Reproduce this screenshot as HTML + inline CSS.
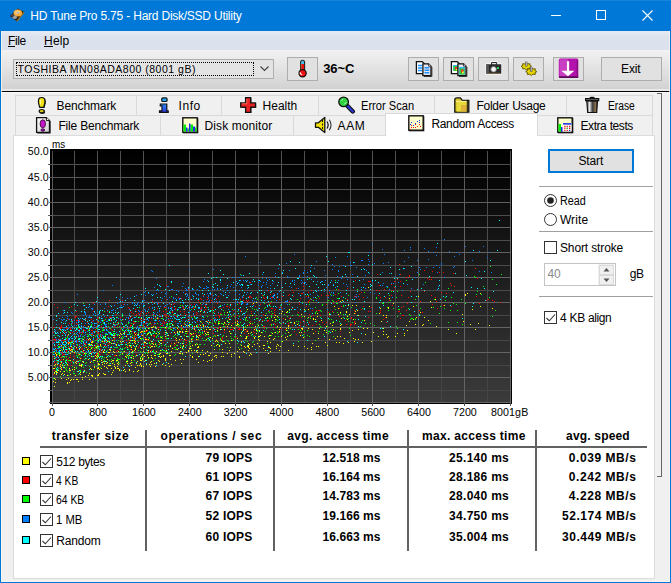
<!DOCTYPE html>
<html lang="en">
<head>
<meta charset="utf-8">
<title>HD Tune Pro 5.75 - Hard Disk/SSD Utility</title>
<style>
html,body{margin:0;padding:0;}
body{width:671px;height:583px;overflow:hidden;background:#f0f0f0;font-family:"Liberation Sans",sans-serif;font-size:12px;color:#000;position:relative;}
.abs{position:absolute;}
#win{position:absolute;left:0;top:0;width:671px;height:583px;overflow:hidden;background:#f0f0f0;}
#title{position:absolute;left:0;top:0;width:671px;height:31px;background:#0078d7;box-shadow:inset 0 1px 0 #1883db;}
#bl{position:absolute;left:0;top:31px;width:1px;height:552px;background:#0078d7;}
#br{position:absolute;left:670px;top:31px;width:1px;height:552px;background:#0078d7;}
#bb{position:absolute;left:0;top:582px;width:671px;height:1px;background:#0078d7;}
#menu{position:absolute;left:1px;top:31px;width:669px;height:19px;background:linear-gradient(#e7ebf3,#dde3ed 30%,#dbe2ed);}
#tool{position:absolute;left:1px;top:50px;width:669px;height:41px;background:linear-gradient(#f2f2f2,#d2d2d2 39px,#e8e8e8 39px,#e8e8e8);}
#sep{position:absolute;left:1px;top:91px;width:669px;height:1px;background:#000;border-bottom:1px solid #fcfcfc;}
#il{position:absolute;left:1px;top:31px;width:1px;height:551px;background:#f8f5ee;opacity:.8}
#ir{position:absolute;left:669px;top:31px;width:1px;height:551px;background:#f8f5ee;opacity:.8}
#ib{position:absolute;left:1px;top:581px;width:669px;height:1px;background:#f8f5ee;}
.tab{position:absolute;height:19px;border:1px solid #d9d9d9;background:#f0f0f0;box-sizing:content-box;}
#panel{position:absolute;left:13px;top:135px;width:640px;height:442px;background:#fff;border:1px solid #dcdcdc;border-top:1px solid #dcdcdc;}
.btn{position:absolute;box-sizing:border-box;border:1px solid #adadad;background:#e1e1e1;}
.hl{position:absolute;height:1px;background:#a0a0a0;}
.cb{position:absolute;width:11px;height:11px;border:1px solid #333;background:#fff;}
.lbl{position:absolute;white-space:pre;font-size:12px;}
.ax{position:absolute;font-size:10.67px;white-space:pre;}
.bm{position:absolute;font-size:12px;font-weight:bold;white-space:pre;}
.sw{position:absolute;width:6px;height:6px;border:1px solid #000;}
</style>
</head>
<body>
<div id="win">
<div id="title"><span class="lbl" style="left:30.3px;top:9px;letter-spacing:-0.27px;word-spacing:0.27px;color:#fff;">HD Tune Pro 5.75 - Hard Disk/SSD Utility</span>
<svg class="abs" style="left:0;top:0" width="671" height="31">
<g stroke="#fff" stroke-width="1" fill="none" shape-rendering="crispEdges">
<path d="M551 15.5h10"/>
<rect x="596.5" y="10.5" width="9" height="9"/>
</g>
<path d="M642.5 10.5l10 10M652.5 10.5l-10 10" stroke="#fff" stroke-width="1.1" fill="none"/>
<g>
<path d="M17.800 8.500l6.400 3.600-7.400 9.200-7-5.300z" fill="#2b2417"/>
<path d="M16.800 21.300l7.400-9.200" stroke="#9a7420" stroke-width="1.300" fill="none"/>
<ellipse cx="17.800" cy="13" rx="4.300" ry="3.500" fill="#f5a93a"/>
<ellipse cx="17.300" cy="12.300" rx="2.600" ry="1.900" fill="#fbc976"/>
<rect x="17" y="12" width="1.800" height="1.600" fill="#9fb0e0"/>
<ellipse cx="14.800" cy="17.200" rx="2.200" ry="1.700" fill="#a3a3a3"/>
<ellipse cx="12.600" cy="15.400" rx="1.500" ry="1.400" fill="#4a4a4a"/>
</g>
</svg>
</div>
<div id="bl"></div><div id="br"></div><div id="bb"></div>
<div id="menu"><span class="lbl" style="left:7.0px;top:2.5px;letter-spacing:-0.35px;"><u>F</u>ile</span><span class="lbl" style="left:43.0px;top:2.5px;letter-spacing:0.20px;"><u>H</u>elp</span></div>
<div id="tool">
<div class="abs" style="left:12px;top:9px;width:259px;height:18px;border:1px solid #adadad;background:#e3e3e3"></div>
<div class="abs" style="left:15px;top:12px;width:238px;height:14px;border:1px dotted #000;box-sizing:border-box"></div>
<span class="lbl" style="font-size:10.5px;left:16.5px;top:12.8px;letter-spacing:0.50px;">TOSHIBA MN08ADA800 (8001 gB)</span>
<svg class="abs" style="left:257px;top:14px" width="14" height="10"><path d="M2.5 2.5l4 4 4-4" stroke="#444" stroke-width="1.2" fill="none"/></svg>
<div class="btn" style="left:286px;top:7px;width:31px;height:24px"><svg width="29" height="22" style="position:absolute;left:0;top:0"><rect x="12.600" y="2.300" width="4" height="13" rx="2" fill="#48c4f2" stroke="#222" stroke-width="1.100"/><rect x="13.200" y="6" width="2.800" height="9" fill="#ee1010"/><path d="M13.300 6v8" stroke="#c06020" stroke-width=".8"/><circle cx="14.600" cy="15.300" r="3.600" fill="#ee1010" stroke="#111" stroke-width="1.200"/><path d="M12.300 14.200v1.600l1.800 1" stroke="#fff" stroke-width="1.100" fill="none"/></svg></div>
<span class="bm" style="font-size:13px;left:322.2px;top:10.5px;letter-spacing:-0.12px;">36~C</span>
<div class="btn" style="left:407px;top:7px;width:31px;height:24px"><svg width="29" height="22" style="position:absolute;left:0;top:0">
<path d="M7.400 3.600H13.200L15.400 5.800V15.700H7.400Z" fill="#fff" stroke="#111" stroke-width="1.300"/>
<path d="M9 7.500h4M9 10h4M9 12.500h4" stroke="#1e90ff" stroke-width="1.600"/>
<path d="M22.900 9V18.500H15" stroke="#444" stroke-width="1" fill="none"/>
<path d="M13.900 5.800H19.600L22 8.200V17.700H13.900Z" fill="#e4e4ec" stroke="#111" stroke-width="1.300"/>
<path d="M19.600 5.800V8.200H22" fill="#fff" stroke="#111" stroke-width=".8"/>
<path d="M15.500 9.800h4.800M15.500 12.300h4.800M15.500 14.800h4.800" stroke="#1e90ff" stroke-width="1.600"/>
</svg></div>
<div class="btn" style="left:442px;top:7px;width:31px;height:24px"><svg width="29" height="22" style="position:absolute;left:0;top:0">
<path d="M7.400 3.600H13.200L15.400 5.800V15.700H7.400Z" fill="#fff" stroke="#111" stroke-width="1.300"/>
<rect x="9" y="7" width="5" height="6" fill="#35b8f0"/><rect x="9.500" y="8" width="4.500" height="5" fill="#3c3"/><rect x="11" y="9" width="2" height="2.500" fill="#e33"/><rect x="12" y="11" width="1.500" height="1.500" fill="#ee3"/>
<path d="M22.900 9V18.500H15" stroke="#444" stroke-width="1" fill="none"/>
<path d="M13.900 5.800H19.600L22 8.200V17.700H13.900Z" fill="#e4e4ec" stroke="#111" stroke-width="1.300"/>
<path d="M19.600 5.800V8.200H22" fill="#fff" stroke="#111" stroke-width=".8"/>
<rect x="15" y="9" width="6" height="7.500" fill="#35b8f0"/><rect x="15.500" y="10.500" width="5" height="6" fill="#3c3"/><rect x="17" y="11.500" width="2.500" height="3" fill="#e33"/><rect x="18" y="13.500" width="1.800" height="1.800" fill="#ee3"/>
</svg></div>
<div class="btn" style="left:477px;top:7px;width:31px;height:24px"><svg width="29" height="22" style="position:absolute;left:0;top:0">
<path d="M7.300 6.200H12V5Q12 4 13 4H17.200Q18.200 4 18.200 5V6.200H22.300V15.800H7.300Z" fill="#2a2a2a" stroke="#fff" stroke-width="1.600" stroke-linejoin="round"/>
<path d="M7.300 6.200H12V5Q12 4 13 4H17.200Q18.200 4 18.200 5V6.200H22.300V15.800H7.300Z" fill="#2a2a2a"/>
<rect x="7.300" y="6.200" width="2.600" height="9.600" fill="#555"/>
<path d="M13 5h4.200v1.200H13z" fill="#ddd"/>
<circle cx="14.600" cy="11.300" r="2.800" fill="#f4f4f4" stroke="#666" stroke-width=".8"/>
<rect x="18" y="9.200" width="2" height="1.800" fill="#22e24a"/>
<path d="M8 15.300H21.500" stroke="#7a6a3a" stroke-width=".8"/>
</svg></div>
<div class="btn" style="left:512px;top:7px;width:31px;height:24px"><svg width="29" height="22" style="position:absolute;left:0;top:0"><path d="M17.5 8.3L15.8 9.3L16.0 10.8L13.7 10.7L12.3 11.9L10.9 10.7L8.6 10.8L8.8 9.3L7.1 8.3L8.8 7.3L8.6 5.8L10.9 5.9L12.3 4.7L13.7 5.9L16.0 5.8L15.8 7.3Z" fill="#e6d600" stroke="#6a5c00" stroke-width="1" stroke-linejoin="round"/><path d="M22.9 13.6L21.0 14.7L21.3 16.4L18.8 16.2L17.3 17.5L15.8 16.2L13.3 16.4L13.6 14.7L11.7 13.6L13.6 12.5L13.3 10.8L15.8 11.0L17.3 9.7L18.8 11.0L21.3 10.8L21.0 12.5Z" fill="#e6d600" stroke="#6a5c00" stroke-width="1" stroke-linejoin="round"/><path d="M12.300 3.500v5" stroke="#555" stroke-width="2.200"/><path d="M17.300 8.800v5" stroke="#555" stroke-width="2.200"/><path d="M12.300 3.500v4.500" stroke="#ccc" stroke-width=".9"/><path d="M17.300 8.800v4.500" stroke="#ccc" stroke-width=".9"/></svg></div>
<div class="btn" style="left:552px;top:7px;width:31px;height:24px"><svg width="29" height="22" style="position:absolute;left:0;top:0">
<rect x="4.800" y=".600" width="19.500" height="19.300" rx="1.500" fill="#b412ac"/>
<path d="M5.500 1.300H14V19H5.500Z" fill="#c93fc3"/>
<path d="M5 18.300H24.300V19.200Q24.300 19.900 23.500 19.900H5.800Q5 19.900 5 19.200Z" fill="#5e0a5a"/>
<path d="M23.300 2V19" stroke="#8a0f84" stroke-width="1.500"/>
<path d="M14.050 3.200V14" stroke="#fff" stroke-width="2.200"/>
<path d="M7.400 12.700H20.400L14 18.200Z" fill="#fff"/>
</svg></div>
<div class="btn" style="left:600px;top:7px;width:61px;height:24px"></div>
<span class="lbl" style="left:620.1px;top:11.5px;letter-spacing:-0.14px;">Exit</span>
</div>
<div id="sep"></div><div id="il"></div><div id="ir"></div><div id="ib"></div>
<svg class="abs" style="left:655px;top:92px" width="10" height="390" shape-rendering="crispEdges"><defs><linearGradient id="gpg" x1="0" y1="0" x2="1" y2="1"><stop offset="0" stop-color="#fff"/><stop offset="1" stop-color="#cfcfcf"/></linearGradient><linearGradient id="gtr" x1="0" y1="0" x2="1" y2="0"><stop offset="0" stop-color="#444"/><stop offset=".25" stop-color="#e6e6e6"/><stop offset=".55" stop-color="#3a3a3a"/><stop offset=".8" stop-color="#8a7048"/><stop offset="1" stop-color="#222"/></linearGradient><linearGradient id="gbl" x1="0" y1="0" x2="0" y2="1"><stop offset="0" stop-color="#2b8cf4"/><stop offset="1" stop-color="#2a32e0"/></linearGradient></defs><path d="M2 1.500h4.500v383h-4.500" stroke="#666" stroke-width="1" fill="none"/></svg>
<div class="tab" style="left:15px;top:95px;width:120px"><svg class="abs" style="left:17px;top:0px" width="20" height="18"><path d="M6.300 5.300Q6.300 2.300 9.500 2.300Q12.700 2.300 12.700 5.300V7.300L11.500 12.100H7.500L6.300 7.300Z" fill="#222"/><ellipse cx="9.500" cy="16" rx="2.700" ry="1.900" fill="#222"/><path d="M5.500 4.600Q5.500 1.500 8.700 1.500Q11.900 1.500 11.900 4.600V6.600L10.700 11.300H6.700L5.500 6.600Z" fill="#f2e016" stroke="#111" stroke-width="1.200"/><path d="M7.500 3.500v5" stroke="#fff78a" stroke-width="1.200"/><ellipse cx="8.700" cy="15.200" rx="2.500" ry="1.700" fill="#dccb10" stroke="#111" stroke-width="1.200"/></svg></div><span class="lbl" style="left:56.5px;top:99px;letter-spacing:-0.11px;z-index:4;">Benchmark</span>
<div class="tab" style="left:136px;top:95px;width:84px"><svg class="abs" style="left:17px;top:0px" width="20" height="18"><rect x="7.700" y="1.900" width="5.400" height="3.600" rx="1.300" fill="#1ea8f4" stroke="#111" stroke-width="1.200"/><path d="M6.300 8H12.800V14.800H14.200V16.300H5.500V14.800H8V9.800H6.300Z" fill="url(#gbl)" stroke="#111" stroke-width="1.200"/></svg></div><span class="lbl" style="left:178.5px;top:99px;letter-spacing:0.59px;z-index:4;">Info</span>
<div class="tab" style="left:221px;top:95px;width:96px"><svg class="abs" style="left:17px;top:0px" width="20" height="18"><path d="M7.300 2.300H12.400V7.600H17.200V11.900H12.400V17H7.300V11.900H2.400V7.600H7.300Z" fill="#333"/><path d="M6.600 1.600H11.700V6.900H16.500V11.200H11.700V16.300H6.600V11.200H1.700V6.900H6.600Z" fill="#e62222" stroke="#111" stroke-width="1.300"/><path d="M7.800 3v4.800H3" stroke="#f46a5a" stroke-width="1" fill="none"/></svg></div><span class="lbl" style="left:262.5px;top:99px;letter-spacing:0.02px;z-index:4;">Health</span>
<div class="tab" style="left:318px;top:95px;width:115px"><svg class="abs" style="left:18px;top:0px" width="20" height="18"><path d="M10.500 10l5.300 5.500" stroke="#111" stroke-width="4.400" stroke-linecap="round"/><path d="M10.500 10l5.300 5.500" stroke="#2a36d8" stroke-width="2.200" stroke-linecap="round"/><circle cx="6.600" cy="5.900" r="4.800" fill="#2fd23f" stroke="#111" stroke-width="1.300"/><path d="M4.300 4.600l1.600-1.600M7.300 8.300l2-2" stroke="#d8ffd8" stroke-width="1"/></svg></div><span class="lbl" style="left:360.5px;top:99px;letter-spacing:0;transform:scaleX(0.926);transform-origin:0 0;z-index:4;">Error Scan</span>
<div class="tab" style="left:434px;top:95px;width:131px"><svg class="abs" style="left:17px;top:0px" width="20" height="18"><path d="M2.800 3.800Q2.800 1.900 4.800 1.900H8.300L10.300 4.300H16.800V16.200H2.800Z" fill="#d8c428" stroke="#111" stroke-width="1.300"/><path d="M4.800 5.800H15V15.600H4.800Z" fill="#e9da3c"/><path d="M9 9H15V15.600H9Z" fill="#d9a63a" opacity=".75"/><path d="M15.300 5v11" stroke="#111" stroke-width="1"/><path d="M4 5.300H14.500" stroke="#fff9a0" stroke-width="1"/></svg></div><span class="lbl" style="left:476.5px;top:99px;letter-spacing:-0.28px;word-spacing:0.28px;z-index:4;">Folder Usage</span>
<div class="tab" style="left:566px;top:95px;width:85px"><svg class="abs" style="left:16px;top:0px" width="20" height="18"><path d="M7 2.300Q7 1.300 8 1.300H10.300Q11.300 1.300 11.300 2.300" stroke="#111" stroke-width="1.300" fill="none"/><path d="M3.800 5H14.500L13.700 16.500H4.700Z" fill="url(#gtr)" stroke="#111" stroke-width="1.200"/><path d="M2.600 2.700H15.700V4.700H2.600Z" fill="#777" stroke="#111" stroke-width="1.200"/></svg></div><span class="lbl" style="left:608.1px;top:99px;letter-spacing:0;transform:scaleX(0.855);transform-origin:0 0;z-index:4;">Erase</span>
<div class="tab" style="left:15px;top:115px;width:144px"><svg class="abs" style="left:18px;top:0px" width="20" height="18"><path d="M3.300 2.300H13.300L16.600 5.300V17.400H3.300Z" fill="#111"/><path d="M2.600 1.600H12.400L15.500 4.600V16.400H2.600Z" fill="url(#gpg)" stroke="#111" stroke-width="1.300"/><path d="M12.400 1.600V4.600H15.500" fill="#fff" stroke="#111" stroke-width="1"/><ellipse cx="8.800" cy="7.800" rx="2.700" ry="4" fill="#c716c7" stroke="#3a0a3a" stroke-width=".9"/><ellipse cx="8.800" cy="14" rx="1.900" ry="1.200" fill="#a010c0" stroke="#3a0a3a" stroke-width=".9"/></svg></div><span class="lbl" style="left:58.5px;top:119px;letter-spacing:-0.21px;word-spacing:0.21px;z-index:4;">File Benchmark</span>
<div class="tab" style="left:160px;top:115px;width:132px"><svg class="abs" style="left:20px;top:0px" width="20" height="18"><rect x="2" y="2" width="15.300" height="15.300" fill="#111"/><rect x="1.800" y="1.800" width="14.400" height="14.400" fill="#ffffcc" stroke="#111" stroke-width="1.400"/><path d="M2.500 15.500V8.500H5V15.500ZM6.500 15.500V12.500H8V15.500ZM9.500 15.500V8.500H12V15.500ZM14 15.500V11.500H15.500V15.500Z" fill="#00f000"/><path d="M5 15.500V11.500H6.500V15.500ZM8 15.500V7.500H9.500V15.500ZM12 15.500V10.500H14V15.500Z" fill="#2222f2"/></svg></div><span class="lbl" style="left:204.5px;top:119px;letter-spacing:0.10px;z-index:4;">Disk monitor</span>
<div class="tab" style="left:293px;top:115px;width:91px"><svg class="abs" style="left:20px;top:0px" width="20" height="18"><path d="M1.500 6.800H4.300L10.800 1.500V16.500L4.300 11.300H1.500Z" fill="#f0e000" stroke="#111" stroke-width="1.300" stroke-linejoin="round"/><path d="M8.500 4v10" stroke="#111" stroke-width="1" stroke-dasharray="2 1.500"/><path d="M13 5.500Q15.300 9 13 12.500" stroke="#111" stroke-width="1.200" fill="none"/><path d="M15.300 3.800Q18.800 9 15.300 14.200" stroke="#333" stroke-width="1.100" fill="none"/></svg></div><span class="lbl" style="left:337.5px;top:119px;letter-spacing:0.64px;z-index:4;">AAM</span>
<div class="tab" style="left:385px;top:113px;width:151px;height:22px;background:#fff;border-bottom:none;z-index:3"><svg class="abs" style="left:21px;top:0px" width="20" height="18"><rect x="2" y="2" width="15.300" height="15.300" fill="#111"/><rect x="1.800" y="1.800" width="14.400" height="14.400" fill="#ffffcc" stroke="#111" stroke-width="1.400"/><g shape-rendering="crispEdges"><path d="M4 8.500h1M3 10.500h1M6 11.500h1M8 9.500h1M10 7.500h1M12 6.500h1M12 8.500h1" stroke="#2030f0" stroke-width="1"/><path d="M4 11.500h1M4 13.500h1M3 15.500h1M8 10.500h1M8 13.500h1M10 12.500h1M12 10.500h1M13 12.500h1M6 13.500h1" stroke="#f01818" stroke-width="1"/></g></svg></div><span class="lbl" style="left:431.5px;top:117px;letter-spacing:-0.36px;word-spacing:0.36px;z-index:4;">Random Access</span>
<div class="tab" style="left:537px;top:115px;width:114px"><svg class="abs" style="left:18px;top:0px" width="20" height="18"><rect x="2" y="2" width="15.300" height="15.300" fill="#111"/><rect x="1.800" y="1.800" width="14.400" height="14.400" fill="#ffffcc" stroke="#111" stroke-width="1.400"/><path d="M2.500 15.500V8H5V15.500Z" fill="#00f000"/><path d="M5 15.500V11H6.500V15.500Z" fill="#2222f2"/><rect x="7" y="7" width="8.500" height="8.500" fill="#fff"/><rect x="7" y="7" width="8.500" height="1.700" fill="#3040e0"/><path d="M8.200 10.500h1.300M10.600 10.500h1.300M13 10.500h1.300M8.200 14.300h1.300M10.600 14.300h1.300" stroke="#f01818" stroke-width="1.300"/><path d="M8.200 12.400h1.300M13 12.400h1.300" stroke="#f01818" stroke-width="1.300"/><path d="M10.600 12.400h1.300" stroke="#12c012" stroke-width="1.300"/><path d="M13 14.300h1.300" stroke="#2030f0" stroke-width="1.300"/></svg></div><span class="lbl" style="left:580.5px;top:119px;letter-spacing:-0.43px;word-spacing:0.43px;z-index:4;">Extra tests</span>
<div id="panel"></div>
<svg class="abs" style="left:0;top:140px" width="530" height="270" shape-rendering="crispEdges">
<defs><linearGradient id="bg" x1="0" y1="0" x2="0" y2="1"><stop offset="0" stop-color="#000"/><stop offset="1" stop-color="#3b3b3b"/></linearGradient><linearGradient id="gmj" gradientUnits="userSpaceOnUse" x1="0" y1="11" x2="0" y2="80"><stop offset="0" stop-color="#525252"/><stop offset="1" stop-color="#646464"/></linearGradient><linearGradient id="gmn" gradientUnits="userSpaceOnUse" x1="0" y1="11" x2="0" y2="263"><stop offset="0" stop-color="#505050"/><stop offset="1" stop-color="#444444"/></linearGradient></defs>
<rect x="50" y="9" width="462" height="255" fill="#000"/>
<rect x="52" y="11" width="459" height="252" fill="url(#bg)"/>
<path d="M74.5 11V263M120.5 11V263M166.5 11V263M212.5 11V263M258.5 11V263M304.5 11V263M350.5 11V263M395.5 11V263M441.5 11V263M487.5 11V263M48 250.5H50M52 250.5H511M48 225.5H50M52 225.5H511M48 200.5H50M52 200.5H511M48 175.5H50M52 175.5H511M48 150.5H50M52 150.5H511M48 125.5H50M52 125.5H511M48 100.5H50M52 100.5H511M48 75.5H50M52 75.5H511M48 49.5H50M52 49.5H511M48 24.5H50M52 24.5H511" stroke="url(#gmn)" stroke-width="1" fill="none"/>
<path d="M52.5 11V263M97.5 11V263M143.5 11V263M189.5 11V263M235.5 11V263M281.5 11V263M327.5 11V263M372.5 11V263M418.5 11V263M464.5 11V263M510.5 11V263M49 262.5H511M48 250.5H52M49 237.5H511M48 225.5H52M49 212.5H511M48 200.5H52M49 187.5H511M48 175.5H52M49 162.5H511M48 150.5H52M49 137.5H511M48 125.5H52M49 112.5H511M48 100.5H52M49 87.5H511M48 75.5H52M49 62.5H511M48 49.5H52M49 37.5H511M48 24.5H52" stroke="url(#gmj)" stroke-width="1" fill="none"/>
<path d="M52.5 263v3M97.5 263v3M143.5 263v3M189.5 263v3M235.5 263v3M281.5 263v3M327.5 263v3M372.5 263v3M418.5 263v3M464.5 263v3M510.5 263v3" stroke="#555" stroke-width="1" fill="none"/>
<path d="M143 192.5h1M136 223.5h1M91 235.5h1M88 186.5h1M347 179.5h1M150 226.5h1M386 182.5h1M153 202.5h1M169 215.5h1M431 167.5h1M223 216.5h1M80 225.5h1M478 183.5h1M56 231.5h1M94 227.5h1M59 215.5h1M316 206.5h1M143 211.5h1M297 184.5h1M254 204.5h1M218 183.5h1M79 214.5h1M148 218.5h1M221 216.5h1M241 192.5h1M60 226.5h1M268 207.5h1M239 209.5h1M141 191.5h1M180 196.5h1M109 225.5h1M222 212.5h1M248 193.5h1M227 181.5h1M231 200.5h1M196 199.5h1M72 202.5h1M137 225.5h1M368 147.5h1M104 223.5h1M146 199.5h1M109 202.5h1M113 197.5h1M91 202.5h1M192 199.5h1M124 192.5h1M190 193.5h1M82 237.5h1M132 211.5h1M159 202.5h1M422 185.5h1M275 175.5h1M72 229.5h1M177 192.5h1M191 199.5h1M159 193.5h1M61 234.5h1M229 210.5h1M159 214.5h1M256 190.5h1M108 212.5h1M404 193.5h1M84 230.5h1M126 214.5h1M88 199.5h1M165 208.5h1M270 202.5h1M152 203.5h1M91 201.5h1M378 196.5h1M69 228.5h1M90 199.5h1M258 185.5h1M106 227.5h1M492 168.5h1M69 208.5h1M174 203.5h1M388 167.5h1M273 199.5h1M286 190.5h1M113 195.5h1M91 229.5h1M104 210.5h1M142 217.5h1M70 234.5h1M288 188.5h1M157 178.5h1M186 191.5h1M112 232.5h1M60 208.5h1M299 192.5h1M267 201.5h1M66 239.5h1M263 205.5h1M200 196.5h1M302 189.5h1M150 211.5h1M150 222.5h1M124 211.5h1M78 231.5h1M70 230.5h1M151 187.5h1M243 187.5h1M83 222.5h1M185 191.5h1M68 203.5h1M98 216.5h1M340 188.5h1M140 224.5h1M82 199.5h1M348 165.5h1M210 201.5h1M133 231.5h1M269 195.5h1M263 208.5h1M72 209.5h1M126 216.5h1M56 214.5h1M388 168.5h1M71 206.5h1M97 221.5h1M205 193.5h1M127 223.5h1M206 194.5h1M189 182.5h1M97 181.5h1M236 196.5h1M318 198.5h1M156 188.5h1M340 172.5h1M98 235.5h1M165 220.5h1M352 165.5h1M133 216.5h1M142 218.5h1M415 184.5h1M189 186.5h1M54 209.5h1M246 197.5h1M152 190.5h1M56 214.5h1M127 213.5h1M151 224.5h1M170 215.5h1M94 216.5h1M383 191.5h1M93 212.5h1M113 211.5h1M99 229.5h1M465 155.5h1M179 199.5h1M339 202.5h1M126 217.5h1M204 191.5h1M304 176.5h1M254 198.5h1M196 195.5h1M145 199.5h1M196 219.5h1M330 183.5h1M220 187.5h1M119 230.5h1M112 223.5h1M105 221.5h1M140 192.5h1M250 183.5h1M186 185.5h1M198 207.5h1M190 215.5h1M147 194.5h1M98 201.5h1M154 206.5h1M346 172.5h1M92 235.5h1M71 239.5h1M101 210.5h1M96 216.5h1M206 181.5h1M148 199.5h1M237 183.5h1M88 204.5h1M341 184.5h1M180 207.5h1M54 233.5h1M179 213.5h1M216 215.5h1M270 211.5h1M69 242.5h1M252 206.5h1M249 208.5h1M98 224.5h1M163 216.5h1M206 199.5h1M251 214.5h1M191 201.5h1M54 221.5h1M165 211.5h1M131 225.5h1M235 182.5h1M54 238.5h1M95 238.5h1M85 236.5h1M319 188.5h1M317 173.5h1M181 186.5h1M256 193.5h1M83 227.5h1M217 201.5h1M113 230.5h1M58 212.5h1M193 193.5h1M169 226.5h1M257 190.5h1M148 217.5h1M117 223.5h1M209 182.5h1M208 187.5h1M321 180.5h1M186 189.5h1M248 210.5h1M338 168.5h1M122 201.5h1M208 194.5h1M56 215.5h1M406 185.5h1M313 193.5h1M85 214.5h1M70 220.5h1M290 182.5h1M107 201.5h1M335 198.5h1M138 202.5h1M215 201.5h1M114 197.5h1M142 219.5h1M420 172.5h1M224 182.5h1M83 232.5h1M383 194.5h1M349 192.5h1M192 199.5h1M260 195.5h1M140 223.5h1M141 216.5h1M117 228.5h1M166 210.5h1M98 206.5h1M430 161.5h1M141 193.5h1M177 188.5h1M105 199.5h1M99 224.5h1M301 192.5h1M358 175.5h1M217 204.5h1M68 203.5h1M180 191.5h1M141 193.5h1M301 188.5h1M241 205.5h1M71 209.5h1M136 206.5h1M158 189.5h1M257 203.5h1M262 180.5h1M274 177.5h1M125 225.5h1M313 179.5h1M444 165.5h1M63 226.5h1M217 190.5h1M245 189.5h1M119 197.5h1M219 181.5h1M124 229.5h1M150 192.5h1M238 184.5h1M98 227.5h1M267 177.5h1M168 195.5h1M278 205.5h1M199 195.5h1M156 193.5h1M61 238.5h1M131 222.5h1M92 205.5h1M251 192.5h1M134 202.5h1M270 195.5h1M174 215.5h1M69 220.5h1M243 211.5h1M214 195.5h1M135 227.5h1M237 211.5h1M92 236.5h1M253 163.5h1M55 242.5h1M373 192.5h1M188 211.5h1M380 160.5h1M247 206.5h1M168 188.5h1M56 212.5h1M352 190.5h1M135 194.5h1M81 225.5h1M203 214.5h1M259 206.5h1M172 184.5h1M258 199.5h1M198 206.5h1M188 185.5h1M198 216.5h1M96 207.5h1M211 205.5h1M210 189.5h1M188 210.5h1M383 188.5h1M294 182.5h1M118 228.5h1M107 219.5h1M249 204.5h1M371 201.5h1M88 199.5h1M67 235.5h1M60 210.5h1M324 190.5h1M191 210.5h1M281 196.5h1M118 224.5h1M180 219.5h1M144 191.5h1M347 176.5h1M166 213.5h1M203 185.5h1M117 226.5h1M60 231.5h1M400 173.5h1M182 213.5h1M192 182.5h1M216 205.5h1M264 205.5h1M472 169.5h1M160 200.5h1M142 195.5h1M203 185.5h1M111 206.5h1M280 187.5h1M196 211.5h1M244 206.5h1M154 223.5h1M315 179.5h1M95 218.5h1M76 239.5h1M90 222.5h1M107 222.5h1M81 206.5h1M109 209.5h1M300 195.5h1M268 213.5h1M489 185.5h1M125 216.5h1M74 212.5h1M224 189.5h1M209 220.5h1M194 210.5h1M225 203.5h1M56 232.5h1M89 233.5h1M64 234.5h1M211 220.5h1M127 221.5h1M197 210.5h1M216 217.5h1M53 241.5h1M182 191.5h1M145 202.5h1M63 209.5h1M83 210.5h1M276 208.5h1M99 224.5h1M256 162.5h1M91 208.5h1M84 208.5h1M61 229.5h1M69 242.5h1M190 208.5h1M197 196.5h1M69 230.5h1M101 228.5h1M115 227.5h1M202 191.5h1M212 198.5h1M74 229.5h1M55 231.5h1M184 195.5h1M115 195.5h1M200 181.5h1M193 196.5h1M73 207.5h1M141 226.5h1M171 198.5h1M247 191.5h1M383 175.5h1M134 192.5h1M54 218.5h1M54 232.5h1M54 228.5h1M121 194.5h1M155 187.5h1M108 225.5h1M148 193.5h1M123 230.5h1M160 217.5h1M95 215.5h1M285 197.5h1M203 186.5h1M269 198.5h1M70 240.5h1M126 196.5h1M117 207.5h1M126 221.5h1M270 208.5h1M298 206.5h1M200 214.5h1M103 221.5h1M288 185.5h1M183 205.5h1M208 192.5h1M225 183.5h1M115 215.5h1M101 212.5h1M180 213.5h1M184 195.5h1M183 219.5h1M180 211.5h1M135 208.5h1M326 192.5h1M117 220.5h1M63 219.5h1M167 213.5h1M58 206.5h1M84 213.5h1M82 221.5h1M252 175.5h1M290 195.5h1M277 186.5h1M237 184.5h1M304 169.5h1M456 193.5h1M149 224.5h1M156 223.5h1M326 186.5h1M240 195.5h1M143 211.5h1M80 234.5h1M184 199.5h1M239 217.5h1M103 207.5h1M388 196.5h1M342 160.5h1M234 213.5h1M161 200.5h1M308 188.5h1M220 189.5h1M177 205.5h1M171 224.5h1M151 206.5h1M318 193.5h1M247 185.5h1M184 169.5h1M217 195.5h1M131 207.5h1M154 195.5h1M231 185.5h1M186 212.5h1M55 213.5h1M86 207.5h1M97 235.5h1M65 194.5h1M138 230.5h1M115 193.5h1M93 220.5h1M172 208.5h1M103 233.5h1M118 211.5h1M216 180.5h1M148 212.5h1M301 174.5h1M177 209.5h1M275 184.5h1M313 178.5h1M259 200.5h1M135 209.5h1M81 226.5h1M56 234.5h1M234 188.5h1M346 171.5h1M176 200.5h1M462 174.5h1M99 233.5h1M379 173.5h1M208 215.5h1M88 235.5h1M261 192.5h1M97 213.5h1M363 188.5h1M223 184.5h1M239 216.5h1M222 209.5h1M230 207.5h1M75 235.5h1M131 209.5h1M119 195.5h1M356 165.5h1M245 198.5h1M62 224.5h1M246 177.5h1M348 202.5h1M141 225.5h1M76 239.5h1M386 177.5h1M79 208.5h1M151 221.5h1M158 220.5h1M162 224.5h1M57 224.5h1M207 192.5h1M480 153.5h1M62 225.5h1M130 206.5h1M153 186.5h1M60 224.5h1M153 204.5h1M475 189.5h1M428 180.5h1M413 166.5h1M151 215.5h1M245 180.5h1M237 198.5h1M243 190.5h1M237 181.5h1M219 206.5h1M91 216.5h1M241 208.5h1M219 205.5h1M227 213.5h1M206 189.5h1M134 200.5h1M416 177.5h1M68 238.5h1M59 207.5h1M116 204.5h1M294 183.5h1M61 227.5h1M229 179.5h1M203 220.5h1M302 188.5h1M97 215.5h1M250 213.5h1M66 223.5h1M140 218.5h1M259 190.5h1M265 175.5h1M97 217.5h1M102 222.5h1M158 201.5h1M413 179.5h1M196 203.5h1M200 185.5h1M147 210.5h1M158 189.5h1M279 191.5h1M274 183.5h1M281 173.5h1M113 220.5h1M66 223.5h1M159 216.5h1M168 223.5h1M123 193.5h1M329 174.5h1M90 228.5h1M178 202.5h1M163 215.5h1M205 213.5h1M89 198.5h1M90 209.5h1M272 180.5h1M67 243.5h1M91 213.5h1M343 203.5h1M56 212.5h1M111 203.5h1M300 158.5h1M92 202.5h1M340 185.5h1M397 193.5h1M120 201.5h1M214 209.5h1M113 195.5h1M463 181.5h1M59 214.5h1M152 187.5h1M165 196.5h1M137 221.5h1M358 189.5h1M340 189.5h1M165 187.5h1M113 203.5h1M63 207.5h1M53 228.5h1M353 198.5h1M106 206.5h1M122 204.5h1M312 189.5h1M354 201.5h1M175 220.5h1M101 220.5h1M129 230.5h1M355 183.5h1M166 222.5h1M161 203.5h1M106 223.5h1M156 211.5h1M236 185.5h1M197 204.5h1M127 215.5h1M170 206.5h1M194 186.5h1M186 196.5h1M105 196.5h1M176 198.5h1M148 188.5h1M409 181.5h1M130 223.5h1M141 178.5h1M82 224.5h1M97 206.5h1M109 212.5h1M114 202.5h1M61 234.5h1M159 221.5h1M118 222.5h1M288 186.5h1M54 225.5h1M98 234.5h1M112 200.5h1M199 190.5h1M286 199.5h1M165 219.5h1M91 208.5h1M111 234.5h1M255 186.5h1M74 233.5h1M174 192.5h1M55 239.5h1M286 172.5h1M177 191.5h1M274 198.5h1M74 206.5h1M247 169.5h1M81 218.5h1M367 188.5h1M77 239.5h1M111 228.5h1M111 221.5h1M142 215.5h1M222 201.5h1M231 214.5h1M155 215.5h1M127 205.5h1M182 208.5h1M150 207.5h1M249 215.5h1M90 213.5h1M76 207.5h1M101 218.5h1M74 201.5h1M337 196.5h1M154 215.5h1M54 246.5h1M287 196.5h1M142 191.5h1M135 207.5h1M70 215.5h1M147 215.5h1M407 190.5h1M338 174.5h1M304 206.5h1M87 209.5h1M380 168.5h1M386 194.5h1M197 212.5h1M125 207.5h1M142 214.5h1M107 228.5h1M161 216.5h1M344 198.5h1M81 211.5h1M126 216.5h1M351 184.5h1M362 202.5h1M209 215.5h1M134 210.5h1M141 220.5h1M334 166.5h1M81 215.5h1M105 234.5h1M279 189.5h1M327 205.5h1M67 242.5h1M265 210.5h1M276 206.5h1M286 188.5h1M165 225.5h1M207 221.5h1M189 201.5h1M191 194.5h1M69 242.5h1M100 204.5h1M136 215.5h1M308 169.5h1M198 197.5h1M138 194.5h1M120 193.5h1M141 225.5h1M126 221.5h1M264 196.5h1M171 211.5h1M80 232.5h1M470 184.5h1M54 222.5h1M246 196.5h1M64 227.5h1M215 189.5h1M285 179.5h1M129 215.5h1M104 212.5h1M79 225.5h1M114 212.5h1M308 177.5h1M279 210.5h1M132 197.5h1M116 204.5h1M137 195.5h1M182 192.5h1M424 177.5h1M155 204.5h1M114 193.5h1M170 205.5h1M67 224.5h1M200 171.5h1M115 228.5h1M132 200.5h1M196 186.5h1M73 222.5h1M72 211.5h1M254 197.5h1M64 231.5h1M311 207.5h1M70 210.5h1M132 212.5h1M146 203.5h1M480 166.5h1M70 197.5h1M146 190.5h1M144 216.5h1M98 223.5h1M104 217.5h1M275 179.5h1M197 207.5h1M325 202.5h1M130 200.5h1M58 230.5h1M183 209.5h1M201 187.5h1M81 224.5h1M214 216.5h1M189 208.5h1M124 196.5h1M98 228.5h1M165 218.5h1M227 172.5h1M210 213.5h1M91 202.5h1M212 219.5h1M57 232.5h1M139 225.5h1M143 226.5h1M282 171.5h1M60 214.5h1M94 210.5h1M182 203.5h1M140 198.5h1M288 210.5h1M192 205.5h1M227 186.5h1M89 239.5h1M73 239.5h1M135 203.5h1M259 196.5h1M312 203.5h1M137 231.5h1M192 217.5h1M133 200.5h1M146 224.5h1M70 205.5h1M201 212.5h1M94 220.5h1M195 204.5h1M210 197.5h1M190 206.5h1M63 202.5h1M215 215.5h1M192 216.5h1M97 228.5h1M329 199.5h1M102 224.5h1M165 194.5h1M67 219.5h1M130 191.5h1M303 197.5h1M114 226.5h1M155 226.5h1M181 185.5h1M340 196.5h1M248 203.5h1M186 200.5h1M116 220.5h1M231 216.5h1M307 208.5h1M74 227.5h1M395 196.5h1M160 213.5h1M91 204.5h1M116 215.5h1M151 195.5h1M99 211.5h1M75 222.5h1M127 209.5h1M161 197.5h1M436 186.5h1M94 226.5h1M104 234.5h1M381 181.5h1M73 203.5h1M229 191.5h1M183 205.5h1M63 206.5h1M248 206.5h1M131 217.5h1M404 195.5h1M82 239.5h1M92 201.5h1M58 206.5h1M100 205.5h1M151 201.5h1M287 171.5h1M59 207.5h1M80 207.5h1M103 201.5h1M349 174.5h1M54 230.5h1M112 220.5h1M70 213.5h1M258 196.5h1M311 209.5h1M248 207.5h1M68 194.5h1M103 211.5h1M340 161.5h1M353 179.5h1M418 156.5h1M129 205.5h1M198 222.5h1M55 224.5h1M54 230.5h1M423 184.5h1M230 207.5h1M217 204.5h1M179 191.5h1M141 208.5h1M219 183.5h1M152 218.5h1M202 210.5h1M110 210.5h1M355 199.5h1M54 216.5h1M127 207.5h1M282 201.5h1M341 178.5h1M218 195.5h1M69 202.5h1M166 192.5h1M336 202.5h1M107 194.5h1M73 208.5h1M389 158.5h1M358 199.5h1M209 189.5h1M151 217.5h1M202 190.5h1M467 153.5h1M318 206.5h1M130 206.5h1M245 207.5h1M160 210.5h1M194 189.5h1M386 175.5h1M110 225.5h1M104 226.5h1M465 154.5h1M196 185.5h1M369 166.5h1M200 214.5h1M119 229.5h1M174 192.5h1M241 201.5h1M144 207.5h1M365 194.5h1M226 196.5h1M181 223.5h1M435 159.5h1M129 202.5h1M448 189.5h1M131 212.5h1M293 205.5h1M89 204.5h1M289 169.5h1M88 219.5h1M84 206.5h1M354 173.5h1M183 206.5h1M393 163.5h1M129 229.5h1M280 206.5h1M168 223.5h1M102 201.5h1M355 171.5h1M288 192.5h1M333 189.5h1M130 196.5h1M228 184.5h1M125 231.5h1M81 201.5h1M364 180.5h1M145 220.5h1M76 221.5h1M129 194.5h1M131 220.5h1M76 213.5h1M61 222.5h1M216 200.5h1M317 176.5h1M229 203.5h1M83 199.5h1M333 182.5h1M140 220.5h1M106 217.5h1M80 218.5h1M144 202.5h1M244 212.5h1M62 233.5h1M170 219.5h1M248 205.5h1M332 185.5h1M133 205.5h1M221 200.5h1M103 212.5h1M145 198.5h1M177 195.5h1M61 205.5h1M332 191.5h1M135 201.5h1M175 194.5h1M145 202.5h1M116 205.5h1M269 207.5h1M277 176.5h1M275 192.5h1M78 241.5h1M254 189.5h1M200 204.5h1M148 210.5h1M133 218.5h1M230 196.5h1M122 213.5h1M246 198.5h1M230 193.5h1M89 229.5h1M207 211.5h1M114 224.5h1M76 223.5h1M152 206.5h1M387 197.5h1M357 170.5h1M272 193.5h1M277 204.5h1M58 220.5h1" stroke="#ffff00" stroke-width="1" fill="none"/><path d="M118 184.5h1M398 171.5h1M268 150.5h1M204 190.5h1M70 192.5h1M274 187.5h1M101 196.5h1M178 189.5h1M169 181.5h1M378 155.5h1M216 159.5h1M219 176.5h1M162 176.5h1M70 189.5h1M431 139.5h1M83 189.5h1M62 212.5h1M91 177.5h1M156 187.5h1M95 209.5h1M114 198.5h1M312 185.5h1M386 182.5h1M216 199.5h1M114 202.5h1M237 187.5h1M129 213.5h1M195 190.5h1M70 188.5h1M138 173.5h1M144 197.5h1M266 188.5h1M72 183.5h1M172 172.5h1M73 220.5h1M338 149.5h1M96 186.5h1M136 171.5h1M300 158.5h1M192 199.5h1M108 166.5h1M154 196.5h1M274 172.5h1M93 207.5h1M231 164.5h1M271 174.5h1M289 161.5h1M158 204.5h1M244 193.5h1M399 171.5h1M71 166.5h1M149 177.5h1M328 157.5h1M116 194.5h1M76 191.5h1M64 206.5h1M59 189.5h1M141 171.5h1M130 171.5h1M130 177.5h1M299 162.5h1M379 150.5h1M453 133.5h1M279 159.5h1M208 158.5h1M76 197.5h1M54 199.5h1M150 205.5h1M82 193.5h1M227 188.5h1M85 207.5h1M55 212.5h1M171 180.5h1M111 177.5h1M268 170.5h1M182 188.5h1M300 182.5h1M96 186.5h1M171 203.5h1M159 174.5h1M298 172.5h1M234 176.5h1M106 177.5h1M329 152.5h1M321 155.5h1M110 180.5h1M133 173.5h1M67 221.5h1M238 189.5h1M239 188.5h1M89 207.5h1M126 184.5h1M126 185.5h1M179 158.5h1M451 145.5h1M274 183.5h1M200 189.5h1M81 218.5h1M389 160.5h1M68 179.5h1M311 150.5h1M167 195.5h1M201 159.5h1M166 175.5h1M66 211.5h1M147 199.5h1M309 182.5h1M350 184.5h1M279 169.5h1M203 188.5h1M306 156.5h1M176 202.5h1M175 204.5h1M262 180.5h1M141 195.5h1M77 201.5h1M217 163.5h1M174 163.5h1M492 160.5h1M164 200.5h1M183 167.5h1M81 200.5h1M72 192.5h1M95 206.5h1M68 202.5h1M436 161.5h1M340 191.5h1M241 189.5h1M255 176.5h1M368 177.5h1M60 217.5h1M454 146.5h1M255 166.5h1M243 160.5h1M218 180.5h1M368 141.5h1M58 217.5h1M198 195.5h1M260 164.5h1M175 199.5h1M406 170.5h1M282 156.5h1M192 194.5h1M392 165.5h1M58 193.5h1M213 190.5h1M164 194.5h1M316 184.5h1M165 165.5h1M86 199.5h1M94 185.5h1M181 158.5h1M410 151.5h1M131 185.5h1M61 207.5h1M296 194.5h1M394 141.5h1M186 180.5h1M226 166.5h1M368 171.5h1M77 209.5h1M85 203.5h1M289 154.5h1M391 155.5h1M155 177.5h1M294 191.5h1M62 215.5h1M191 176.5h1M63 189.5h1M211 154.5h1M161 185.5h1M363 166.5h1M270 154.5h1M96 188.5h1M59 225.5h1M312 170.5h1M300 187.5h1M205 165.5h1M161 176.5h1M203 194.5h1M56 187.5h1M135 175.5h1M92 181.5h1M109 160.5h1M408 157.5h1M79 189.5h1M308 161.5h1M420 161.5h1M155 180.5h1M57 216.5h1M166 145.5h1M140 189.5h1M84 203.5h1M102 217.5h1M59 199.5h1M110 202.5h1M84 197.5h1M58 199.5h1M154 195.5h1M164 183.5h1M341 156.5h1M249 156.5h1M351 184.5h1M76 171.5h1M377 134.5h1M500 162.5h1M218 156.5h1M152 190.5h1M96 206.5h1M289 178.5h1M272 157.5h1M304 181.5h1M380 172.5h1M69 207.5h1M84 216.5h1M224 192.5h1M126 206.5h1M230 189.5h1M114 196.5h1M164 174.5h1M401 167.5h1M309 174.5h1M91 194.5h1M62 213.5h1M173 164.5h1M175 194.5h1M98 205.5h1M96 214.5h1M225 183.5h1M175 169.5h1M153 202.5h1M73 216.5h1M68 204.5h1M201 168.5h1M271 174.5h1M77 220.5h1M355 140.5h1M128 191.5h1M54 214.5h1M194 167.5h1M329 176.5h1M99 217.5h1M59 204.5h1M154 184.5h1M63 214.5h1M55 227.5h1M403 175.5h1M244 189.5h1M439 132.5h1M231 193.5h1M108 203.5h1M132 210.5h1M201 164.5h1M246 160.5h1M180 175.5h1M67 219.5h1M90 221.5h1M99 214.5h1M254 195.5h1M494 161.5h1M101 194.5h1M292 185.5h1M180 192.5h1M347 159.5h1M83 211.5h1M113 209.5h1M182 177.5h1M64 187.5h1M61 223.5h1M64 191.5h1M431 137.5h1M252 184.5h1M135 169.5h1M222 198.5h1M264 188.5h1M247 161.5h1M261 177.5h1M69 203.5h1M158 198.5h1M54 211.5h1M240 171.5h1M55 208.5h1M292 168.5h1M106 214.5h1M299 164.5h1M57 192.5h1M232 187.5h1M292 150.5h1M68 222.5h1M306 166.5h1M76 183.5h1M140 173.5h1M64 214.5h1M239 189.5h1M145 198.5h1M121 199.5h1M370 141.5h1M339 176.5h1M172 167.5h1M402 175.5h1M143 172.5h1M268 164.5h1M53 187.5h1M252 160.5h1M403 166.5h1M204 170.5h1M220 168.5h1M219 177.5h1M158 178.5h1M76 180.5h1M85 204.5h1M293 152.5h1M81 218.5h1M68 218.5h1M90 206.5h1M143 180.5h1M66 210.5h1M435 157.5h1M118 204.5h1M144 205.5h1M62 195.5h1M165 174.5h1M93 163.5h1M139 205.5h1M99 195.5h1M129 206.5h1M98 177.5h1M195 193.5h1M376 150.5h1M114 186.5h1M190 195.5h1M328 157.5h1M99 196.5h1M126 191.5h1M126 195.5h1M271 157.5h1M303 143.5h1M122 160.5h1M82 192.5h1M202 184.5h1M64 187.5h1M53 202.5h1M100 210.5h1M136 193.5h1M129 178.5h1M380 170.5h1M176 208.5h1M319 181.5h1M69 210.5h1M132 191.5h1M326 164.5h1M146 182.5h1M266 169.5h1M437 168.5h1M169 183.5h1M193 188.5h1M130 186.5h1M290 177.5h1M240 170.5h1M244 177.5h1M144 203.5h1M220 198.5h1M61 200.5h1M148 172.5h1M197 181.5h1M131 172.5h1M279 192.5h1M363 157.5h1M110 177.5h1M207 181.5h1M73 216.5h1M158 163.5h1M135 211.5h1M248 195.5h1M117 186.5h1M57 221.5h1M153 195.5h1M288 155.5h1M308 152.5h1M219 187.5h1M276 187.5h1M189 167.5h1M113 206.5h1M97 181.5h1M136 197.5h1M162 183.5h1M164 192.5h1M117 210.5h1M185 153.5h1M128 167.5h1M57 167.5h1M70 217.5h1M56 219.5h1M361 152.5h1M232 187.5h1M109 177.5h1M145 191.5h1M107 205.5h1M220 173.5h1M92 190.5h1M55 217.5h1M95 205.5h1M198 185.5h1M476 156.5h1M199 162.5h1M275 169.5h1M92 211.5h1M103 201.5h1M251 171.5h1M120 177.5h1M104 202.5h1M429 139.5h1M79 181.5h1M165 167.5h1M267 181.5h1M98 193.5h1M82 211.5h1M206 167.5h1M313 175.5h1M98 182.5h1M140 186.5h1M263 174.5h1M105 207.5h1M191 164.5h1M134 201.5h1M57 216.5h1M88 195.5h1M170 166.5h1M248 160.5h1M134 193.5h1M53 216.5h1M231 189.5h1M255 188.5h1M186 174.5h1M198 160.5h1M64 206.5h1M160 187.5h1M163 171.5h1M96 199.5h1M354 170.5h1M112 190.5h1M60 188.5h1M114 179.5h1M154 191.5h1M124 186.5h1M70 208.5h1M303 146.5h1M165 176.5h1M74 218.5h1M81 215.5h1M83 201.5h1M75 177.5h1M316 170.5h1M319 158.5h1M239 168.5h1M141 181.5h1M168 179.5h1M54 222.5h1M424 130.5h1M77 180.5h1M109 201.5h1M105 194.5h1M383 179.5h1M475 128.5h1M189 185.5h1M67 196.5h1M87 191.5h1M237 175.5h1M107 214.5h1M308 162.5h1M249 184.5h1M165 198.5h1M107 200.5h1M123 164.5h1M95 189.5h1M184 184.5h1M110 208.5h1M190 159.5h1M162 185.5h1M72 202.5h1M75 177.5h1M347 148.5h1M134 198.5h1M115 195.5h1M91 201.5h1M116 184.5h1M59 196.5h1M98 192.5h1M306 185.5h1M168 176.5h1M175 168.5h1M234 173.5h1M328 155.5h1M75 176.5h1M145 179.5h1M153 178.5h1M274 174.5h1M419 170.5h1M136 214.5h1M223 195.5h1M67 195.5h1M211 179.5h1M205 166.5h1M101 212.5h1M172 171.5h1M272 168.5h1M359 159.5h1M53 192.5h1M100 214.5h1M253 191.5h1M250 166.5h1M63 189.5h1M153 170.5h1M65 181.5h1M157 187.5h1M270 184.5h1M128 188.5h1M53 199.5h1M175 181.5h1M152 174.5h1M93 171.5h1M146 191.5h1M149 205.5h1M56 220.5h1M407 163.5h1M202 190.5h1M251 173.5h1M131 206.5h1M188 177.5h1M197 173.5h1M137 187.5h1M133 183.5h1M157 168.5h1M107 171.5h1M249 157.5h1M104 180.5h1M141 180.5h1M90 206.5h1M197 199.5h1M127 213.5h1M446 153.5h1M422 172.5h1M222 197.5h1M215 178.5h1M183 189.5h1M194 175.5h1M309 160.5h1M92 192.5h1M164 182.5h1M97 178.5h1M169 188.5h1M281 167.5h1M443 165.5h1M246 191.5h1M239 163.5h1M88 211.5h1M176 176.5h1M105 194.5h1M79 193.5h1M71 225.5h1M147 178.5h1M296 148.5h1M318 170.5h1M315 191.5h1M198 186.5h1M329 150.5h1M409 136.5h1M279 167.5h1M283 178.5h1M187 193.5h1M355 173.5h1M143 186.5h1M60 190.5h1M400 146.5h1M266 157.5h1M359 154.5h1M145 183.5h1M195 167.5h1M214 167.5h1M211 160.5h1M293 156.5h1M105 204.5h1M99 185.5h1M166 188.5h1M66 186.5h1M134 183.5h1M477 138.5h1M87 194.5h1M424 151.5h1M188 167.5h1M115 195.5h1M77 184.5h1M335 154.5h1M178 157.5h1M158 181.5h1M63 200.5h1M76 208.5h1M289 185.5h1M205 185.5h1M304 192.5h1M66 217.5h1M196 172.5h1M82 181.5h1M236 196.5h1M142 206.5h1M138 201.5h1M173 176.5h1M74 185.5h1M324 184.5h1M95 200.5h1M101 186.5h1M78 180.5h1M392 150.5h1M96 191.5h1M151 178.5h1M145 205.5h1M281 188.5h1M240 179.5h1M400 178.5h1M218 173.5h1M68 225.5h1M85 190.5h1M361 152.5h1M252 164.5h1M151 189.5h1M61 187.5h1M247 175.5h1M196 174.5h1M156 174.5h1M273 157.5h1M299 176.5h1M67 188.5h1M200 158.5h1M345 180.5h1M82 199.5h1M188 191.5h1M320 175.5h1M79 217.5h1M251 173.5h1M89 184.5h1M225 186.5h1M188 149.5h1M72 198.5h1M106 193.5h1M185 200.5h1M254 192.5h1M60 187.5h1M218 188.5h1M100 210.5h1M115 215.5h1M346 184.5h1M203 155.5h1M91 212.5h1M300 185.5h1M85 179.5h1M193 168.5h1M67 202.5h1M269 164.5h1M443 132.5h1M99 219.5h1M70 215.5h1M193 187.5h1M70 190.5h1M270 152.5h1M227 166.5h1M82 208.5h1M186 200.5h1M116 211.5h1M200 188.5h1M59 216.5h1M133 183.5h1M79 180.5h1M113 183.5h1M130 209.5h1M170 188.5h1M338 160.5h1M108 183.5h1M133 168.5h1M441 152.5h1M322 182.5h1M205 169.5h1M65 192.5h1M301 153.5h1M361 169.5h1M88 200.5h1M240 159.5h1M195 191.5h1M136 174.5h1M400 134.5h1M79 201.5h1M328 172.5h1M70 190.5h1M273 153.5h1M181 199.5h1M385 177.5h1M99 212.5h1M451 166.5h1M237 180.5h1M174 174.5h1M66 188.5h1M91 190.5h1M64 199.5h1M341 166.5h1M232 189.5h1M53 199.5h1M221 199.5h1M149 167.5h1M72 180.5h1M243 157.5h1M298 187.5h1M56 223.5h1M56 209.5h1M486 160.5h1M431 155.5h1M263 186.5h1M247 190.5h1M212 169.5h1M302 153.5h1M54 221.5h1M291 169.5h1M61 186.5h1M170 193.5h1M185 204.5h1M207 182.5h1M103 207.5h1M380 157.5h1M122 187.5h1M232 183.5h1M166 171.5h1M75 190.5h1M370 171.5h1M74 201.5h1M100 209.5h1M134 199.5h1M200 169.5h1M371 167.5h1M113 184.5h1M252 166.5h1M78 190.5h1M139 175.5h1M117 182.5h1M184 171.5h1M141 184.5h1M356 156.5h1M229 176.5h1M185 184.5h1M194 164.5h1M200 196.5h1M54 230.5h1M77 209.5h1M235 198.5h1M154 182.5h1M78 214.5h1M158 187.5h1M200 174.5h1M164 182.5h1M190 203.5h1M186 200.5h1M208 158.5h1M354 184.5h1M124 196.5h1M182 166.5h1M385 157.5h1M283 183.5h1M149 178.5h1M215 189.5h1M229 167.5h1M235 180.5h1M79 223.5h1M400 141.5h1M103 190.5h1M115 182.5h1M68 218.5h1M271 168.5h1M99 198.5h1M127 209.5h1M150 182.5h1M319 170.5h1M54 164.5h1M105 205.5h1M138 207.5h1M115 184.5h1M250 142.5h1M146 186.5h1M89 212.5h1M259 181.5h1M70 202.5h1M53 234.5h1M166 159.5h1M229 183.5h1M140 175.5h1M166 182.5h1M288 183.5h1M117 187.5h1M197 180.5h1M67 199.5h1M74 194.5h1M251 157.5h1M61 219.5h1M488 159.5h1M179 175.5h1M243 188.5h1M354 156.5h1M326 182.5h1M158 198.5h1M263 157.5h1M249 185.5h1M379 145.5h1M173 185.5h1M130 177.5h1M133 181.5h1M322 182.5h1M111 189.5h1M120 196.5h1M109 204.5h1M69 183.5h1M215 175.5h1M62 217.5h1M168 173.5h1M224 190.5h1M71 179.5h1M188 180.5h1M409 135.5h1M238 186.5h1M96 213.5h1M100 206.5h1M202 183.5h1M183 168.5h1M82 205.5h1M114 215.5h1M151 210.5h1M140 179.5h1M351 177.5h1M332 171.5h1M127 203.5h1M163 181.5h1M130 198.5h1M206 191.5h1M180 171.5h1M84 190.5h1M109 177.5h1M131 176.5h1M127 190.5h1M116 174.5h1M214 187.5h1M95 207.5h1M208 196.5h1M308 156.5h1M151 184.5h1M154 183.5h1M350 185.5h1M175 193.5h1M114 209.5h1M170 164.5h1M135 182.5h1M167 195.5h1M104 205.5h1M79 184.5h1M246 164.5h1M339 168.5h1M301 177.5h1M89 190.5h1M67 196.5h1M215 175.5h1M89 209.5h1M124 202.5h1M264 186.5h1M146 173.5h1M218 175.5h1M214 171.5h1M91 179.5h1M184 173.5h1M121 203.5h1M289 164.5h1M354 182.5h1M205 172.5h1M56 216.5h1M102 210.5h1M210 162.5h1M55 200.5h1M401 155.5h1M181 186.5h1M201 167.5h1M336 161.5h1M369 141.5h1M215 183.5h1M229 176.5h1M147 190.5h1M88 189.5h1M399 124.5h1M432 131.5h1M189 172.5h1M207 181.5h1M72 202.5h1M140 185.5h1M98 181.5h1M115 184.5h1M55 206.5h1M174 205.5h1M188 167.5h1M81 209.5h1M262 155.5h1M55 218.5h1M62 193.5h1M354 181.5h1M479 163.5h1M176 187.5h1M92 194.5h1M148 200.5h1M165 208.5h1M79 196.5h1M397 139.5h1M94 195.5h1M193 171.5h1M171 180.5h1M75 206.5h1M120 189.5h1M394 147.5h1M152 161.5h1M206 163.5h1M108 197.5h1M432 164.5h1M134 195.5h1M87 182.5h1M72 221.5h1M123 179.5h1M163 202.5h1M220 194.5h1M129 168.5h1M191 193.5h1M88 200.5h1M213 193.5h1M64 200.5h1M237 161.5h1M130 185.5h1M271 175.5h1M71 210.5h1M84 185.5h1M76 176.5h1M391 144.5h1M68 201.5h1M59 206.5h1M267 180.5h1M71 222.5h1M71 207.5h1M276 157.5h1M333 163.5h1M285 189.5h1M264 158.5h1M129 200.5h1M148 211.5h1M207 157.5h1M80 192.5h1M143 184.5h1M270 163.5h1M351 178.5h1M84 208.5h1M141 192.5h1M384 149.5h1M250 181.5h1M105 188.5h1M275 184.5h1M136 195.5h1M303 180.5h1M214 159.5h1M55 199.5h1M164 167.5h1M450 143.5h1M71 201.5h1M114 199.5h1M126 200.5h1M311 176.5h1M326 155.5h1M134 197.5h1M303 149.5h1M250 156.5h1M274 170.5h1M79 205.5h1M228 178.5h1M223 167.5h1M105 201.5h1M83 214.5h1M233 170.5h1M406 137.5h1M155 175.5h1M427 138.5h1M171 189.5h1M184 182.5h1M310 159.5h1M61 228.5h1M94 216.5h1M268 180.5h1M78 222.5h1M60 220.5h1M186 202.5h1M61 185.5h1M215 195.5h1M74 213.5h1M244 162.5h1M207 159.5h1" stroke="#ff0000" stroke-width="1" fill="none"/><path d="M68 206.5h1M310 158.5h1M88 214.5h1M266 178.5h1M136 181.5h1M257 186.5h1M315 200.5h1M233 174.5h1M53 212.5h1M82 198.5h1M298 181.5h1M62 211.5h1M96 206.5h1M66 205.5h1M189 185.5h1M287 172.5h1M133 198.5h1M145 213.5h1M62 210.5h1M305 170.5h1M218 204.5h1M96 226.5h1M245 179.5h1M267 203.5h1M169 186.5h1M81 201.5h1M95 196.5h1M119 209.5h1M177 205.5h1M213 196.5h1M98 189.5h1M254 182.5h1M181 189.5h1M227 180.5h1M490 126.5h1M220 166.5h1M271 185.5h1M86 213.5h1M351 167.5h1M64 201.5h1M222 183.5h1M364 152.5h1M126 184.5h1M167 198.5h1M304 196.5h1M70 203.5h1M203 177.5h1M271 175.5h1M207 198.5h1M90 209.5h1M448 148.5h1M238 186.5h1M128 216.5h1M162 178.5h1M245 180.5h1M230 187.5h1M149 183.5h1M105 200.5h1M360 186.5h1M307 195.5h1M321 171.5h1M220 174.5h1M389 155.5h1M177 195.5h1M475 137.5h1M164 205.5h1M370 183.5h1M224 174.5h1M462 184.5h1M146 177.5h1M175 189.5h1M120 212.5h1M355 179.5h1M53 208.5h1M227 175.5h1M143 182.5h1M333 161.5h1M155 203.5h1M154 213.5h1M270 166.5h1M277 193.5h1M122 196.5h1M170 173.5h1M102 217.5h1M133 211.5h1M128 199.5h1M309 196.5h1M247 196.5h1M257 178.5h1M60 236.5h1M231 198.5h1M307 190.5h1M98 198.5h1M124 186.5h1M71 181.5h1M60 208.5h1M117 207.5h1M103 183.5h1M82 201.5h1M220 165.5h1M388 162.5h1M142 198.5h1M162 198.5h1M131 205.5h1M103 190.5h1M409 174.5h1M271 195.5h1M416 165.5h1M309 138.5h1M95 200.5h1M122 214.5h1M333 196.5h1M465 163.5h1M93 198.5h1M331 179.5h1M98 225.5h1M134 196.5h1M111 206.5h1M179 192.5h1M169 213.5h1M156 197.5h1M110 216.5h1M223 186.5h1M183 209.5h1M271 176.5h1M132 215.5h1M88 195.5h1M129 193.5h1M329 191.5h1M60 221.5h1M191 198.5h1M408 168.5h1M451 157.5h1M94 208.5h1M180 205.5h1M88 196.5h1M102 190.5h1M145 189.5h1M158 200.5h1M256 178.5h1M309 162.5h1M130 194.5h1M445 160.5h1M53 238.5h1M66 222.5h1M136 176.5h1M184 183.5h1M69 192.5h1M102 181.5h1M273 189.5h1M327 162.5h1M56 220.5h1M75 194.5h1M63 235.5h1M120 214.5h1M119 223.5h1M323 194.5h1M275 196.5h1M67 225.5h1M133 188.5h1M175 209.5h1M200 204.5h1M153 210.5h1M128 214.5h1M171 189.5h1M202 198.5h1M264 180.5h1M166 193.5h1M329 179.5h1M261 184.5h1M269 164.5h1M266 188.5h1M78 234.5h1M439 173.5h1M213 196.5h1M251 187.5h1M200 163.5h1M362 168.5h1M420 168.5h1M257 159.5h1M397 151.5h1M161 187.5h1M79 223.5h1M186 205.5h1M348 178.5h1M178 193.5h1M101 201.5h1M333 155.5h1M73 219.5h1M91 195.5h1M86 188.5h1M109 220.5h1M107 210.5h1M105 194.5h1M73 223.5h1M99 178.5h1M383 163.5h1M313 160.5h1M148 197.5h1M282 195.5h1M156 187.5h1M214 195.5h1M320 170.5h1M200 189.5h1M130 206.5h1M230 196.5h1M337 163.5h1M75 197.5h1M477 151.5h1M209 197.5h1M68 235.5h1M68 208.5h1M90 211.5h1M387 167.5h1M53 211.5h1M189 202.5h1M326 190.5h1M117 194.5h1M153 220.5h1M165 211.5h1M496 144.5h1M412 178.5h1M433 167.5h1M58 199.5h1M139 167.5h1M108 197.5h1M110 193.5h1M80 230.5h1M119 186.5h1M224 186.5h1M445 157.5h1M115 182.5h1M109 193.5h1M278 192.5h1M69 217.5h1M110 194.5h1M246 171.5h1M72 226.5h1M135 207.5h1M89 229.5h1M397 188.5h1M78 215.5h1M119 219.5h1M144 190.5h1M114 218.5h1M227 164.5h1M101 197.5h1M114 200.5h1M115 193.5h1M59 214.5h1M78 213.5h1M186 193.5h1M277 191.5h1M160 196.5h1M159 204.5h1M59 202.5h1M104 217.5h1M77 188.5h1M139 190.5h1M195 178.5h1M154 212.5h1M86 201.5h1M174 178.5h1M147 193.5h1M271 161.5h1M180 183.5h1M453 163.5h1M320 177.5h1M220 199.5h1M123 190.5h1M121 209.5h1M345 158.5h1M203 200.5h1M155 186.5h1M84 206.5h1M171 189.5h1M160 189.5h1M125 207.5h1M252 183.5h1M111 219.5h1M250 175.5h1M219 209.5h1M192 198.5h1M153 191.5h1M254 169.5h1M182 198.5h1M131 215.5h1M104 182.5h1M118 200.5h1M343 174.5h1M78 198.5h1M308 155.5h1M94 224.5h1M191 189.5h1M228 201.5h1M157 177.5h1M153 199.5h1M191 169.5h1M102 195.5h1M247 180.5h1M70 202.5h1M142 185.5h1M237 171.5h1M74 233.5h1M145 197.5h1M322 165.5h1M156 206.5h1M340 173.5h1M70 206.5h1M146 195.5h1M149 202.5h1M233 187.5h1M69 220.5h1M105 204.5h1M113 209.5h1M229 182.5h1M140 189.5h1M66 216.5h1M150 183.5h1M234 196.5h1M103 180.5h1M66 222.5h1M256 157.5h1M78 213.5h1M69 167.5h1M121 188.5h1M104 220.5h1M284 174.5h1M84 197.5h1M302 162.5h1M61 190.5h1M166 198.5h1M132 185.5h1M218 181.5h1M192 213.5h1M179 167.5h1M84 216.5h1M411 178.5h1M166 184.5h1M183 177.5h1M256 169.5h1M121 198.5h1M106 194.5h1M117 187.5h1M157 183.5h1M99 218.5h1M77 216.5h1M224 201.5h1M376 158.5h1M289 170.5h1M67 209.5h1M145 197.5h1M84 219.5h1M444 168.5h1M69 187.5h1M63 223.5h1M119 205.5h1M175 214.5h1M95 191.5h1M212 183.5h1M215 196.5h1M177 175.5h1M96 195.5h1M62 198.5h1M264 163.5h1M154 192.5h1M269 172.5h1M69 187.5h1M212 200.5h1M182 214.5h1M246 187.5h1M101 184.5h1M148 192.5h1M171 156.5h1M153 211.5h1M108 186.5h1M328 193.5h1M80 214.5h1M158 214.5h1M219 181.5h1M108 180.5h1M114 193.5h1M176 209.5h1M66 219.5h1M192 185.5h1M117 218.5h1M182 206.5h1M56 210.5h1M128 217.5h1M121 211.5h1M140 217.5h1M118 219.5h1M148 218.5h1M83 227.5h1M55 218.5h1M114 184.5h1M80 211.5h1M73 231.5h1M158 207.5h1M201 170.5h1M142 203.5h1M168 173.5h1M199 187.5h1M343 166.5h1M169 188.5h1M269 178.5h1M276 187.5h1M113 222.5h1M272 173.5h1M335 190.5h1M336 163.5h1M54 211.5h1M376 173.5h1M256 175.5h1M58 228.5h1M142 217.5h1M250 193.5h1M214 181.5h1M92 216.5h1M300 190.5h1M224 172.5h1M148 207.5h1M403 189.5h1M104 171.5h1M194 177.5h1M128 209.5h1M122 176.5h1M419 134.5h1M253 201.5h1M202 193.5h1M141 193.5h1M214 179.5h1M126 222.5h1M160 184.5h1M258 197.5h1M278 177.5h1M61 217.5h1M330 154.5h1M121 180.5h1M232 169.5h1M98 215.5h1M143 187.5h1M271 177.5h1M98 213.5h1M318 191.5h1M396 186.5h1M81 198.5h1M166 211.5h1M146 209.5h1M68 213.5h1M58 207.5h1M170 183.5h1M222 196.5h1M298 201.5h1M320 186.5h1M89 212.5h1M268 171.5h1M155 193.5h1M164 187.5h1M173 196.5h1M348 155.5h1M82 198.5h1M165 169.5h1M177 170.5h1M213 178.5h1M116 221.5h1M87 212.5h1M85 223.5h1M72 210.5h1M387 147.5h1M218 202.5h1M119 215.5h1M362 180.5h1M149 198.5h1M218 182.5h1M102 188.5h1M349 188.5h1M88 206.5h1M67 196.5h1M304 191.5h1M87 194.5h1M135 216.5h1M56 229.5h1M217 191.5h1M72 201.5h1M397 176.5h1M55 210.5h1M55 226.5h1M257 190.5h1M224 183.5h1M170 172.5h1M109 171.5h1M118 182.5h1M104 197.5h1M126 216.5h1M103 189.5h1M133 200.5h1M90 204.5h1M82 191.5h1M303 194.5h1M98 201.5h1M233 199.5h1M223 170.5h1M58 206.5h1M240 134.5h1M246 187.5h1M328 160.5h1M297 174.5h1M365 183.5h1M95 220.5h1M62 207.5h1M174 195.5h1M80 231.5h1M191 208.5h1M316 171.5h1M141 198.5h1M76 227.5h1M276 179.5h1M235 177.5h1M108 183.5h1M335 140.5h1M62 216.5h1M399 169.5h1M169 184.5h1M226 184.5h1M86 201.5h1M100 195.5h1M90 194.5h1M492 139.5h1M85 213.5h1M457 182.5h1M203 172.5h1M111 179.5h1M266 173.5h1M132 195.5h1M148 184.5h1M280 165.5h1M93 229.5h1M127 205.5h1M103 219.5h1M474 136.5h1M149 188.5h1M99 221.5h1M411 156.5h1M159 191.5h1M122 174.5h1M157 191.5h1M425 142.5h1M191 193.5h1M217 188.5h1M67 197.5h1M158 194.5h1M203 188.5h1M63 206.5h1M98 207.5h1M66 230.5h1M68 235.5h1M91 185.5h1M73 207.5h1M489 157.5h1M132 213.5h1M201 212.5h1M319 184.5h1M196 203.5h1M195 167.5h1M338 153.5h1M280 183.5h1M147 213.5h1M172 190.5h1M184 177.5h1M237 164.5h1M138 188.5h1M93 212.5h1M73 233.5h1M113 191.5h1M146 212.5h1M263 155.5h1M347 175.5h1M434 159.5h1M79 217.5h1M131 183.5h1M75 190.5h1M141 212.5h1M174 207.5h1M130 187.5h1M410 179.5h1M176 205.5h1M450 170.5h1M331 189.5h1M71 202.5h1M154 169.5h1M223 195.5h1M168 206.5h1M243 201.5h1M215 191.5h1M58 204.5h1M91 207.5h1M162 187.5h1M71 184.5h1M151 203.5h1M222 165.5h1M492 176.5h1M198 199.5h1M134 181.5h1M207 167.5h1M124 219.5h1M251 195.5h1M106 214.5h1M95 207.5h1M275 181.5h1M77 205.5h1M173 176.5h1M147 206.5h1M167 185.5h1M72 221.5h1M155 180.5h1M161 205.5h1M192 196.5h1M96 206.5h1M117 184.5h1M231 176.5h1M350 195.5h1M376 157.5h1M114 207.5h1M180 165.5h1M58 212.5h1M277 180.5h1M117 195.5h1M182 165.5h1M165 194.5h1M121 188.5h1M131 218.5h1M101 206.5h1M53 214.5h1M289 180.5h1M298 183.5h1M430 183.5h1M117 202.5h1M100 195.5h1M262 192.5h1M140 219.5h1M59 206.5h1M281 201.5h1M57 195.5h1M83 205.5h1M138 181.5h1M117 219.5h1M58 217.5h1M110 188.5h1M137 200.5h1M289 195.5h1M65 224.5h1M332 182.5h1M122 208.5h1M315 172.5h1M333 181.5h1M165 188.5h1M69 213.5h1M271 171.5h1M137 204.5h1M457 170.5h1M191 177.5h1M130 203.5h1M68 220.5h1M98 194.5h1M153 175.5h1M122 198.5h1M98 214.5h1M271 184.5h1M240 182.5h1M78 186.5h1M285 193.5h1M266 180.5h1M65 228.5h1M287 181.5h1M164 210.5h1M316 181.5h1M185 193.5h1M166 206.5h1M328 191.5h1M97 188.5h1M201 182.5h1M81 206.5h1M67 231.5h1M315 173.5h1M337 158.5h1M65 207.5h1M209 200.5h1M461 159.5h1M78 199.5h1M175 207.5h1M79 224.5h1M208 184.5h1M83 163.5h1M108 191.5h1M410 175.5h1M127 220.5h1M69 232.5h1M415 179.5h1M162 196.5h1M156 205.5h1M122 190.5h1M357 149.5h1M257 178.5h1M272 173.5h1M129 193.5h1M396 157.5h1M257 191.5h1M268 196.5h1M105 179.5h1M66 229.5h1M448 182.5h1M211 186.5h1M63 231.5h1M126 214.5h1M71 204.5h1M58 213.5h1M69 229.5h1M189 204.5h1M128 182.5h1M65 198.5h1M124 208.5h1M265 191.5h1M143 192.5h1M61 201.5h1M245 200.5h1M263 187.5h1M235 184.5h1M291 194.5h1M226 177.5h1M120 204.5h1M128 189.5h1M161 210.5h1M162 209.5h1M96 218.5h1M202 192.5h1M322 164.5h1M199 204.5h1M149 203.5h1M68 191.5h1M298 175.5h1M100 191.5h1M179 179.5h1M287 190.5h1M481 154.5h1M195 191.5h1M197 186.5h1M390 160.5h1M173 185.5h1M62 224.5h1M218 184.5h1M253 196.5h1M83 196.5h1M76 213.5h1M54 195.5h1M257 184.5h1M315 167.5h1M137 215.5h1M184 195.5h1M110 202.5h1M388 170.5h1M200 194.5h1M292 175.5h1M249 182.5h1M456 164.5h1M78 187.5h1M327 186.5h1M126 189.5h1M415 159.5h1M227 200.5h1M310 178.5h1M245 186.5h1M128 191.5h1M139 177.5h1M92 207.5h1M117 177.5h1M114 194.5h1M289 164.5h1M398 169.5h1M93 201.5h1M235 197.5h1M57 222.5h1M239 185.5h1M202 184.5h1M65 221.5h1M307 180.5h1M188 196.5h1M296 181.5h1M214 206.5h1M110 197.5h1M175 197.5h1M240 204.5h1M495 170.5h1M85 214.5h1M264 168.5h1M173 196.5h1M146 179.5h1M220 198.5h1M256 188.5h1M160 184.5h1M185 167.5h1M76 215.5h1M193 166.5h1M128 199.5h1M150 204.5h1M63 226.5h1M88 208.5h1M278 196.5h1M205 200.5h1M232 200.5h1M157 195.5h1M241 208.5h1M131 193.5h1M168 188.5h1M181 188.5h1M66 227.5h1M179 179.5h1M161 178.5h1M210 182.5h1M93 197.5h1M274 192.5h1M87 212.5h1M310 176.5h1M300 162.5h1M66 198.5h1M155 218.5h1M81 194.5h1M137 194.5h1M116 207.5h1M252 202.5h1M89 189.5h1M62 189.5h1M297 159.5h1M332 160.5h1M104 203.5h1M191 184.5h1M241 185.5h1M141 199.5h1M189 202.5h1M96 188.5h1M227 207.5h1M159 213.5h1M337 172.5h1M339 181.5h1M103 203.5h1M197 184.5h1M102 217.5h1M93 222.5h1M123 197.5h1M100 227.5h1M231 193.5h1M167 184.5h1M265 167.5h1M195 205.5h1M152 193.5h1M80 220.5h1M215 182.5h1M406 140.5h1M111 193.5h1M86 222.5h1M82 212.5h1M321 187.5h1M60 200.5h1M140 211.5h1M73 201.5h1M501 134.5h1M108 183.5h1M98 181.5h1M205 195.5h1M57 214.5h1M64 217.5h1M177 187.5h1M346 178.5h1M307 178.5h1M198 192.5h1M207 176.5h1M348 181.5h1M128 182.5h1M271 192.5h1M60 214.5h1M302 176.5h1M56 212.5h1M160 197.5h1M82 225.5h1M374 185.5h1M109 223.5h1M58 221.5h1M245 178.5h1M338 158.5h1M97 205.5h1M74 210.5h1M88 190.5h1M139 185.5h1M97 200.5h1M76 228.5h1M96 208.5h1M91 184.5h1M343 177.5h1M101 197.5h1M105 193.5h1M382 163.5h1M166 177.5h1M121 183.5h1M104 196.5h1M237 185.5h1M290 188.5h1M316 158.5h1M238 207.5h1M335 169.5h1M207 194.5h1M309 164.5h1M391 151.5h1M128 203.5h1M132 187.5h1M190 203.5h1M221 174.5h1M104 184.5h1M200 192.5h1M163 210.5h1M86 218.5h1M343 165.5h1M125 204.5h1M114 179.5h1M130 190.5h1M241 196.5h1M150 194.5h1M108 201.5h1M155 179.5h1M96 203.5h1M173 174.5h1M169 180.5h1M122 218.5h1M180 181.5h1M64 216.5h1M98 208.5h1M124 219.5h1M85 205.5h1M219 209.5h1M476 154.5h1M175 187.5h1M128 183.5h1M415 178.5h1M132 222.5h1M67 212.5h1M221 183.5h1M318 156.5h1M183 201.5h1M123 211.5h1M170 189.5h1M84 208.5h1M89 226.5h1M333 172.5h1M65 187.5h1M135 198.5h1M287 176.5h1M187 181.5h1M247 201.5h1M187 191.5h1M79 220.5h1M65 220.5h1M245 180.5h1M109 216.5h1M336 149.5h1M169 183.5h1M157 214.5h1M419 174.5h1M134 220.5h1M119 212.5h1M298 189.5h1M138 210.5h1M156 196.5h1M174 215.5h1M483 146.5h1M213 172.5h1M239 176.5h1M329 173.5h1M105 207.5h1M81 200.5h1M103 198.5h1M118 221.5h1M237 203.5h1M59 207.5h1M252 168.5h1M101 216.5h1M86 232.5h1M400 173.5h1M56 230.5h1M421 148.5h1M440 166.5h1M204 204.5h1M352 182.5h1M77 204.5h1M138 192.5h1M149 191.5h1M393 168.5h1M55 217.5h1M211 170.5h1M240 161.5h1M105 212.5h1M229 172.5h1" stroke="#00ff00" stroke-width="1" fill="none"/><path d="M213 144.5h1M102 195.5h1M66 214.5h1M253 165.5h1M240 140.5h1M59 211.5h1M123 188.5h1M76 201.5h1M142 160.5h1M479 111.5h1M178 183.5h1M136 155.5h1M211 162.5h1M202 164.5h1M114 185.5h1M169 171.5h1M262 145.5h1M97 170.5h1M106 206.5h1M78 184.5h1M76 182.5h1M80 196.5h1M363 139.5h1M61 201.5h1M192 167.5h1M103 182.5h1M215 179.5h1M131 196.5h1M433 127.5h1M65 202.5h1M351 125.5h1M56 210.5h1M266 169.5h1M57 208.5h1M341 138.5h1M172 149.5h1M423 144.5h1M148 153.5h1M177 177.5h1M113 175.5h1M146 179.5h1M57 216.5h1M152 167.5h1M161 160.5h1M199 167.5h1M100 199.5h1M187 168.5h1M355 156.5h1M310 154.5h1M59 178.5h1M270 145.5h1M282 132.5h1M246 164.5h1M97 201.5h1M115 185.5h1M93 191.5h1M352 137.5h1M252 160.5h1M209 153.5h1M199 150.5h1M206 148.5h1M258 140.5h1M237 162.5h1M120 179.5h1M247 164.5h1M98 186.5h1M192 187.5h1M63 170.5h1M287 160.5h1M85 183.5h1M187 150.5h1M160 166.5h1M90 195.5h1M161 183.5h1M157 157.5h1M147 179.5h1M126 202.5h1M331 155.5h1M86 201.5h1M259 165.5h1M129 194.5h1M81 189.5h1M343 143.5h1M76 201.5h1M104 190.5h1M235 159.5h1M370 152.5h1M386 146.5h1M298 153.5h1M85 172.5h1M102 170.5h1M149 177.5h1M228 155.5h1M152 159.5h1M152 168.5h1M216 155.5h1M62 180.5h1M417 132.5h1M171 181.5h1M227 150.5h1M168 181.5h1M153 176.5h1M338 131.5h1M135 199.5h1M238 170.5h1M54 220.5h1M109 188.5h1M332 124.5h1M84 195.5h1M206 146.5h1M204 139.5h1M383 143.5h1M144 160.5h1M242 145.5h1M170 170.5h1M326 147.5h1M210 152.5h1M91 168.5h1M109 199.5h1M173 157.5h1M194 181.5h1M261 147.5h1M134 163.5h1M236 141.5h1M65 187.5h1M246 154.5h1M214 179.5h1M483 106.5h1M212 149.5h1M79 179.5h1M189 181.5h1M157 163.5h1M187 154.5h1M171 168.5h1M157 164.5h1M53 211.5h1M209 160.5h1M300 162.5h1M186 153.5h1M239 157.5h1M197 180.5h1M69 199.5h1M192 155.5h1M73 205.5h1M95 187.5h1M138 195.5h1M284 168.5h1M123 166.5h1M236 145.5h1M227 147.5h1M92 187.5h1M436 107.5h1M207 147.5h1M79 206.5h1M339 126.5h1M312 168.5h1M58 211.5h1M333 144.5h1M138 170.5h1M148 180.5h1M130 197.5h1M97 201.5h1M287 161.5h1M206 161.5h1M89 166.5h1M199 184.5h1M347 116.5h1M438 146.5h1M374 153.5h1M82 196.5h1M126 185.5h1M67 178.5h1M208 147.5h1M58 211.5h1M207 140.5h1M113 206.5h1M347 139.5h1M76 202.5h1M129 190.5h1M76 201.5h1M80 198.5h1M185 186.5h1M78 195.5h1M104 168.5h1M294 114.5h1M210 180.5h1M277 154.5h1M83 179.5h1M173 176.5h1M53 195.5h1M292 140.5h1M76 204.5h1M285 161.5h1M53 209.5h1M221 154.5h1M170 178.5h1M100 182.5h1M64 189.5h1M69 213.5h1M56 184.5h1M193 149.5h1M130 158.5h1M114 165.5h1M174 188.5h1M393 143.5h1M398 142.5h1M143 182.5h1M165 153.5h1M433 112.5h1M267 140.5h1M148 163.5h1M299 136.5h1M192 149.5h1M225 178.5h1M64 204.5h1M183 192.5h1M161 152.5h1M328 144.5h1M84 210.5h1M437 149.5h1M258 145.5h1M99 206.5h1M124 164.5h1M56 217.5h1M199 180.5h1M334 126.5h1M215 158.5h1M424 108.5h1M79 186.5h1M86 176.5h1M365 148.5h1M317 141.5h1M148 169.5h1M325 135.5h1M324 130.5h1M128 177.5h1M85 174.5h1M331 152.5h1M163 185.5h1M329 150.5h1M56 199.5h1M156 178.5h1M305 171.5h1M169 157.5h1M129 182.5h1M139 174.5h1M188 176.5h1M282 132.5h1M145 193.5h1M179 159.5h1M216 161.5h1M214 179.5h1M135 164.5h1M104 176.5h1M369 121.5h1M187 183.5h1M233 147.5h1M169 163.5h1M196 177.5h1M89 180.5h1M213 155.5h1M160 176.5h1M301 140.5h1M203 141.5h1M214 161.5h1M286 161.5h1M383 123.5h1M98 180.5h1M146 183.5h1M198 154.5h1M247 148.5h1M95 183.5h1M85 194.5h1M57 205.5h1M141 163.5h1M91 196.5h1M269 170.5h1M115 204.5h1M65 197.5h1M187 154.5h1M156 153.5h1M74 180.5h1M274 158.5h1M203 160.5h1M73 194.5h1M171 149.5h1M70 205.5h1M203 156.5h1M97 190.5h1M185 168.5h1M121 197.5h1M335 147.5h1M368 119.5h1M318 150.5h1M62 211.5h1M156 138.5h1M188 157.5h1M222 165.5h1M129 182.5h1M188 148.5h1M154 183.5h1M273 157.5h1M250 144.5h1M196 164.5h1M242 156.5h1M229 152.5h1M69 187.5h1M78 180.5h1M186 149.5h1M304 130.5h1M368 124.5h1M244 175.5h1M234 169.5h1M185 177.5h1M68 195.5h1M101 180.5h1M178 151.5h1M131 196.5h1M138 188.5h1M97 195.5h1M83 191.5h1M127 190.5h1M238 182.5h1M195 153.5h1M129 169.5h1M415 137.5h1M182 162.5h1M198 155.5h1M247 140.5h1M60 206.5h1M302 142.5h1M107 190.5h1M362 120.5h1M289 146.5h1M219 161.5h1M162 158.5h1M67 176.5h1M275 133.5h1M389 149.5h1M297 167.5h1M272 143.5h1M96 183.5h1M92 168.5h1M64 179.5h1M176 159.5h1M144 186.5h1M115 181.5h1M159 180.5h1M275 136.5h1M179 175.5h1M131 189.5h1M94 171.5h1M198 158.5h1M68 185.5h1M97 197.5h1M193 158.5h1M169 174.5h1M382 132.5h1M199 168.5h1M92 169.5h1M112 170.5h1M62 204.5h1M402 150.5h1M324 151.5h1M81 188.5h1M214 149.5h1M456 112.5h1M84 187.5h1M95 175.5h1M322 141.5h1M172 178.5h1M94 185.5h1M311 139.5h1M436 115.5h1M120 167.5h1M470 112.5h1M85 173.5h1M177 179.5h1M238 142.5h1M164 156.5h1M140 196.5h1M153 193.5h1M444 137.5h1M121 182.5h1M88 203.5h1M221 137.5h1M72 207.5h1M298 148.5h1M160 182.5h1M410 107.5h1M154 167.5h1M174 162.5h1M187 155.5h1M159 176.5h1M79 181.5h1M388 122.5h1M220 142.5h1M101 176.5h1M94 205.5h1M84 172.5h1M84 187.5h1M191 167.5h1M479 131.5h1M141 194.5h1M68 188.5h1M98 174.5h1M355 162.5h1M61 209.5h1M316 121.5h1M160 190.5h1M301 143.5h1M303 137.5h1M62 180.5h1M168 146.5h1M92 193.5h1M273 155.5h1M81 206.5h1M127 188.5h1M174 162.5h1M73 200.5h1M217 149.5h1M110 165.5h1M439 127.5h1M60 199.5h1M122 161.5h1M154 180.5h1M436 125.5h1M108 179.5h1M155 188.5h1M291 147.5h1M188 181.5h1M89 176.5h1M266 144.5h1M256 161.5h1M66 175.5h1M243 162.5h1M106 184.5h1M89 205.5h1M125 196.5h1M184 187.5h1M441 123.5h1M147 171.5h1M77 192.5h1M233 159.5h1M98 162.5h1M239 150.5h1M269 170.5h1M126 177.5h1M242 178.5h1M328 157.5h1M426 127.5h1M78 181.5h1M179 158.5h1M83 165.5h1M144 169.5h1M235 165.5h1M72 182.5h1M189 169.5h1M363 128.5h1M303 152.5h1M102 192.5h1M454 126.5h1M208 155.5h1M244 177.5h1M113 169.5h1M66 207.5h1M64 162.5h1M328 145.5h1M203 163.5h1M242 157.5h1M78 180.5h1M87 198.5h1M73 191.5h1M58 199.5h1M314 128.5h1M255 171.5h1M82 199.5h1M273 156.5h1M104 203.5h1M79 191.5h1M156 180.5h1M79 192.5h1M266 180.5h1M102 198.5h1M90 201.5h1M208 158.5h1M115 207.5h1M266 142.5h1M114 185.5h1M366 130.5h1M94 172.5h1M105 195.5h1M408 117.5h1M61 179.5h1M303 133.5h1M235 151.5h1M101 176.5h1M131 197.5h1M294 142.5h1M170 173.5h1M208 183.5h1M404 121.5h1M165 165.5h1M491 132.5h1M116 184.5h1M127 158.5h1M356 127.5h1M84 208.5h1M221 169.5h1M93 174.5h1M149 177.5h1M304 142.5h1M361 120.5h1M210 153.5h1M203 148.5h1M78 196.5h1M239 154.5h1M91 205.5h1M173 158.5h1M122 167.5h1M228 175.5h1M83 186.5h1M177 174.5h1M364 144.5h1M232 137.5h1M107 181.5h1M201 169.5h1M119 159.5h1M143 165.5h1M269 139.5h1M117 168.5h1M310 130.5h1M64 211.5h1M173 176.5h1M183 169.5h1M137 164.5h1M333 152.5h1M356 154.5h1M112 177.5h1M119 162.5h1M316 160.5h1M171 169.5h1M270 158.5h1M98 197.5h1M91 193.5h1M116 200.5h1M130 158.5h1M387 146.5h1M280 167.5h1M100 194.5h1M151 130.5h1M128 178.5h1M354 122.5h1M338 130.5h1M141 193.5h1M76 200.5h1M181 180.5h1M79 204.5h1M347 146.5h1M55 218.5h1M444 99.5h1M261 146.5h1M209 187.5h1M115 170.5h1M156 187.5h1M139 197.5h1M108 207.5h1M489 112.5h1M252 166.5h1M56 201.5h1M185 148.5h1M292 141.5h1M238 178.5h1M247 163.5h1M103 150.5h1M183 152.5h1M106 193.5h1M213 129.5h1M73 194.5h1M54 214.5h1M183 143.5h1M77 189.5h1M302 163.5h1M212 158.5h1M83 175.5h1M137 195.5h1M189 129.5h1M189 172.5h1M73 201.5h1M78 207.5h1M114 201.5h1M141 185.5h1M437 132.5h1M138 193.5h1M195 152.5h1M187 185.5h1M389 133.5h1M158 150.5h1M117 173.5h1M158 196.5h1M203 179.5h1M369 133.5h1M106 181.5h1M249 142.5h1M68 200.5h1M121 165.5h1M97 175.5h1M317 155.5h1M245 172.5h1M350 122.5h1M73 209.5h1M281 144.5h1M208 156.5h1M183 166.5h1M277 156.5h1M83 201.5h1M104 184.5h1M137 163.5h1M487 117.5h1M151 177.5h1M306 144.5h1M84 204.5h1M340 152.5h1M241 163.5h1M273 141.5h1M193 174.5h1M230 171.5h1M340 137.5h1M287 136.5h1M137 186.5h1M111 195.5h1M145 171.5h1M384 114.5h1M288 137.5h1M332 129.5h1M93 199.5h1M313 157.5h1M410 109.5h1M240 145.5h1M163 163.5h1M239 144.5h1M361 149.5h1M259 168.5h1M145 151.5h1M137 187.5h1M134 191.5h1M399 134.5h1M89 177.5h1M195 165.5h1M80 195.5h1M176 150.5h1M234 137.5h1M53 203.5h1M428 111.5h1M132 178.5h1M147 178.5h1M441 124.5h1M239 137.5h1M129 173.5h1M135 177.5h1M94 183.5h1M208 161.5h1M358 156.5h1M276 167.5h1M79 213.5h1M205 181.5h1M187 186.5h1M79 184.5h1M53 208.5h1M63 189.5h1M122 183.5h1M118 194.5h1M196 154.5h1M61 213.5h1M193 173.5h1M308 157.5h1M89 184.5h1M454 116.5h1M210 171.5h1M119 191.5h1M380 145.5h1M171 167.5h1M81 192.5h1M199 191.5h1M156 162.5h1M338 140.5h1M57 223.5h1M404 128.5h1M74 197.5h1M61 202.5h1M128 181.5h1M100 164.5h1M145 170.5h1M107 197.5h1M277 153.5h1M93 188.5h1M105 163.5h1M160 187.5h1M122 175.5h1M204 148.5h1M72 181.5h1M173 190.5h1M76 193.5h1M186 150.5h1M177 183.5h1M122 157.5h1M112 203.5h1M258 142.5h1M154 163.5h1M274 154.5h1M122 199.5h1M104 189.5h1M167 164.5h1M185 177.5h1M111 172.5h1M78 201.5h1M299 135.5h1M459 114.5h1M55 190.5h1M63 173.5h1M65 194.5h1M243 140.5h1M58 195.5h1M131 187.5h1M127 164.5h1M72 195.5h1M241 135.5h1M310 168.5h1M120 161.5h1M331 140.5h1M142 188.5h1M64 210.5h1M254 161.5h1M267 147.5h1M294 140.5h1M77 194.5h1M255 158.5h1M105 164.5h1M395 136.5h1M266 138.5h1M81 185.5h1M192 178.5h1M112 145.5h1M203 184.5h1M139 171.5h1M94 164.5h1M66 203.5h1M337 136.5h1M118 178.5h1M208 167.5h1M61 206.5h1M155 183.5h1M222 148.5h1M76 185.5h1M109 198.5h1M153 193.5h1M62 177.5h1M210 154.5h1M245 116.5h1M53 179.5h1M335 117.5h1M205 164.5h1M168 178.5h1M407 144.5h1M303 132.5h1M71 185.5h1M141 184.5h1M93 198.5h1M231 144.5h1M117 163.5h1M139 188.5h1M68 198.5h1M65 209.5h1M105 186.5h1M186 156.5h1M327 169.5h1M86 211.5h1M270 148.5h1M76 204.5h1M159 170.5h1M223 151.5h1M237 161.5h1M98 202.5h1M428 119.5h1M132 162.5h1M122 173.5h1M74 185.5h1M88 211.5h1M192 187.5h1M113 179.5h1M166 154.5h1M65 181.5h1M178 167.5h1M263 170.5h1M417 120.5h1M310 127.5h1M228 169.5h1M124 196.5h1M279 151.5h1M144 188.5h1M287 164.5h1M122 194.5h1M242 162.5h1M180 183.5h1M87 191.5h1M119 167.5h1M465 106.5h1M109 193.5h1M167 195.5h1M98 191.5h1M230 146.5h1M168 168.5h1M295 169.5h1M54 202.5h1M333 153.5h1M72 173.5h1M128 194.5h1M157 172.5h1M226 148.5h1M183 163.5h1M343 125.5h1M97 187.5h1M325 140.5h1M105 186.5h1M392 157.5h1M372 141.5h1M71 180.5h1M76 182.5h1M180 177.5h1M307 132.5h1M106 190.5h1M217 148.5h1M152 164.5h1M286 123.5h1M263 142.5h1M141 183.5h1M350 125.5h1M382 109.5h1M149 191.5h1M72 207.5h1M149 197.5h1M261 175.5h1M105 184.5h1M58 208.5h1M87 212.5h1M174 177.5h1M207 153.5h1M56 211.5h1M267 175.5h1M280 169.5h1M118 204.5h1M247 152.5h1M152 131.5h1M77 211.5h1M80 202.5h1M218 172.5h1M75 201.5h1M171 176.5h1M100 202.5h1M164 166.5h1M68 199.5h1M171 167.5h1M242 163.5h1M190 170.5h1M188 148.5h1M262 134.5h1M404 110.5h1M83 192.5h1M449 111.5h1M154 147.5h1M278 128.5h1M102 178.5h1M419 127.5h1M346 136.5h1M420 129.5h1M346 144.5h1M361 147.5h1M453 127.5h1M116 192.5h1M178 169.5h1M64 187.5h1M108 192.5h1M426 127.5h1M272 156.5h1M178 183.5h1M132 163.5h1M84 200.5h1M203 176.5h1M159 171.5h1M88 177.5h1M311 159.5h1M62 202.5h1M192 166.5h1M411 148.5h1M153 154.5h1M175 158.5h1M198 168.5h1M234 173.5h1M267 150.5h1M367 157.5h1M224 164.5h1M70 204.5h1M307 136.5h1M58 193.5h1M260 122.5h1M235 163.5h1M88 167.5h1M156 174.5h1M144 152.5h1M352 134.5h1M382 145.5h1M197 149.5h1M214 177.5h1M168 167.5h1M90 200.5h1M365 135.5h1M77 154.5h1M94 191.5h1M157 164.5h1M60 204.5h1M262 138.5h1M73 205.5h1M145 155.5h1M90 177.5h1M111 178.5h1M321 141.5h1M71 172.5h1M69 179.5h1M83 203.5h1M116 194.5h1M289 130.5h1M153 174.5h1M170 176.5h1M167 159.5h1M83 191.5h1M173 176.5h1M356 157.5h1M63 179.5h1M225 154.5h1M143 177.5h1M391 143.5h1M70 197.5h1M154 173.5h1M140 185.5h1M93 180.5h1M71 183.5h1M105 185.5h1M80 178.5h1M388 122.5h1M305 142.5h1M186 180.5h1M143 163.5h1M111 198.5h1M166 152.5h1M472 120.5h1M345 126.5h1M100 196.5h1M197 165.5h1M129 180.5h1M111 170.5h1M92 183.5h1M174 169.5h1M200 147.5h1M258 168.5h1M139 165.5h1M374 123.5h1M245 140.5h1M107 170.5h1M151 154.5h1M167 146.5h1M156 150.5h1M175 178.5h1M123 201.5h1M175 189.5h1M105 193.5h1M83 205.5h1M202 179.5h1M220 153.5h1M72 188.5h1M85 174.5h1M166 179.5h1M235 154.5h1M252 141.5h1M182 146.5h1M190 165.5h1M95 173.5h1M372 104.5h1M147 183.5h1M80 196.5h1M71 198.5h1M202 191.5h1M260 141.5h1M241 147.5h1M264 160.5h1M197 180.5h1M85 174.5h1M204 172.5h1M138 162.5h1M369 112.5h1M276 160.5h1" stroke="#0080ff" stroke-width="1" fill="none"/><path d="M63 192.5h1M192 186.5h1M363 147.5h1M242 161.5h1M341 162.5h1M220 130.5h1M111 194.5h1M246 213.5h1M158 201.5h1M167 183.5h1M178 208.5h1M97 186.5h1M201 187.5h1M104 198.5h1M357 136.5h1M345 134.5h1M146 223.5h1M238 201.5h1M127 194.5h1M171 176.5h1M171 164.5h1M58 217.5h1M316 151.5h1M154 191.5h1M99 189.5h1M58 220.5h1M119 205.5h1M267 166.5h1M188 159.5h1M144 193.5h1M364 129.5h1M144 221.5h1M196 197.5h1M101 197.5h1M114 191.5h1M172 185.5h1M90 205.5h1M163 163.5h1M147 178.5h1M81 171.5h1M198 159.5h1M75 162.5h1M79 230.5h1M214 189.5h1M62 203.5h1M364 161.5h1M473 163.5h1M387 181.5h1M124 193.5h1M132 186.5h1M339 158.5h1M183 203.5h1M78 178.5h1M290 158.5h1M333 145.5h1M199 146.5h1M194 176.5h1M84 179.5h1M393 151.5h1M279 182.5h1M63 212.5h1M84 204.5h1M179 194.5h1M163 223.5h1M347 160.5h1M66 180.5h1M450 165.5h1M316 137.5h1M68 201.5h1M138 197.5h1M152 189.5h1M116 177.5h1M122 184.5h1M63 207.5h1M109 172.5h1M141 204.5h1M57 230.5h1M223 134.5h1M199 167.5h1M354 159.5h1M125 190.5h1M145 197.5h1M90 186.5h1M202 150.5h1M180 162.5h1M66 186.5h1M307 200.5h1M148 207.5h1M55 193.5h1M154 163.5h1M122 175.5h1M169 172.5h1M135 191.5h1M64 205.5h1M94 205.5h1M484 131.5h1M78 221.5h1M215 143.5h1M324 144.5h1M64 211.5h1M57 227.5h1M235 150.5h1M253 139.5h1M56 176.5h1M79 199.5h1M107 194.5h1M437 103.5h1M261 160.5h1M84 171.5h1M77 211.5h1M210 153.5h1M214 180.5h1M152 211.5h1M74 199.5h1M169 150.5h1M294 144.5h1M69 198.5h1M106 186.5h1M71 202.5h1M85 225.5h1M74 188.5h1M259 180.5h1M281 164.5h1M116 180.5h1M358 179.5h1M153 172.5h1M172 170.5h1M187 165.5h1M241 144.5h1M121 230.5h1M71 179.5h1M273 166.5h1M96 161.5h1M57 229.5h1M113 177.5h1M240 167.5h1M58 202.5h1M162 176.5h1M263 132.5h1M235 159.5h1M106 189.5h1M244 183.5h1M380 134.5h1M60 192.5h1M148 152.5h1M99 217.5h1M243 173.5h1M218 167.5h1M205 186.5h1M59 213.5h1M440 159.5h1M134 165.5h1M121 202.5h1M110 183.5h1M220 139.5h1M56 193.5h1M219 179.5h1M151 162.5h1M72 186.5h1M497 110.5h1M399 129.5h1M220 140.5h1M345 126.5h1M181 178.5h1M111 207.5h1M196 158.5h1M91 221.5h1M142 161.5h1M315 150.5h1M83 221.5h1M243 155.5h1M66 209.5h1M75 198.5h1M151 194.5h1M159 168.5h1M390 127.5h1M70 190.5h1M262 185.5h1M66 202.5h1M85 180.5h1M139 214.5h1M252 194.5h1M443 156.5h1M65 206.5h1M471 147.5h1M229 171.5h1M357 175.5h1M194 169.5h1M313 141.5h1M299 161.5h1M189 175.5h1M107 216.5h1M380 188.5h1M122 189.5h1M246 167.5h1M147 210.5h1M246 158.5h1M238 173.5h1M114 195.5h1M131 191.5h1M213 185.5h1M254 173.5h1M356 169.5h1M62 195.5h1M264 154.5h1M165 204.5h1M180 203.5h1M144 179.5h1M127 194.5h1M383 162.5h1M439 140.5h1M117 173.5h1M187 196.5h1M414 171.5h1M257 152.5h1M103 187.5h1M90 211.5h1M91 214.5h1M250 166.5h1M65 195.5h1M403 189.5h1M112 214.5h1M58 173.5h1M292 167.5h1M97 196.5h1M68 208.5h1M209 199.5h1M310 131.5h1M197 187.5h1M167 193.5h1M98 185.5h1M198 171.5h1M108 205.5h1M398 166.5h1M63 227.5h1M148 163.5h1M104 206.5h1M100 216.5h1M133 184.5h1M146 220.5h1M61 221.5h1M499 80.5h1M175 173.5h1M177 169.5h1M138 202.5h1M241 202.5h1M390 186.5h1M98 191.5h1M74 196.5h1M370 144.5h1M78 182.5h1M279 124.5h1M256 212.5h1M147 203.5h1M81 211.5h1M249 177.5h1M343 157.5h1M403 128.5h1M215 191.5h1M314 136.5h1M57 192.5h1M261 153.5h1M300 155.5h1M119 191.5h1M109 201.5h1M171 198.5h1M466 135.5h1M165 194.5h1M105 204.5h1M88 211.5h1M255 158.5h1M254 179.5h1M110 192.5h1M86 202.5h1M100 200.5h1M345 174.5h1M179 192.5h1M79 209.5h1M167 202.5h1M361 182.5h1M278 137.5h1M283 130.5h1M99 171.5h1M379 167.5h1M248 145.5h1M201 189.5h1M182 160.5h1M264 152.5h1M207 182.5h1M124 194.5h1M321 178.5h1M267 210.5h1M345 165.5h1M182 160.5h1M89 190.5h1M65 212.5h1M96 179.5h1M77 165.5h1M241 193.5h1M133 168.5h1M106 186.5h1M108 231.5h1M110 223.5h1M230 165.5h1M254 141.5h1M307 182.5h1M259 150.5h1M54 211.5h1M132 188.5h1M58 223.5h1M138 177.5h1M208 180.5h1M86 188.5h1M328 121.5h1M291 159.5h1M259 187.5h1M279 169.5h1M241 171.5h1M256 189.5h1M368 132.5h1M186 166.5h1M125 185.5h1M182 177.5h1M113 193.5h1M125 179.5h1M260 179.5h1M178 194.5h1M315 157.5h1M143 204.5h1M359 140.5h1M180 158.5h1M147 171.5h1M153 193.5h1M357 151.5h1M201 170.5h1M250 153.5h1M89 218.5h1M109 192.5h1M173 188.5h1M76 189.5h1M149 192.5h1M263 162.5h1M438 148.5h1M243 184.5h1M120 154.5h1M183 186.5h1M144 201.5h1M292 189.5h1M213 170.5h1M78 185.5h1M223 155.5h1M67 189.5h1M335 142.5h1M78 199.5h1M188 172.5h1M107 175.5h1M230 174.5h1M216 137.5h1M303 181.5h1M163 179.5h1M93 195.5h1M166 222.5h1M179 179.5h1M472 166.5h1M134 160.5h1M298 138.5h1M103 197.5h1M212 146.5h1M218 195.5h1M65 204.5h1M131 179.5h1M99 185.5h1M208 169.5h1M66 192.5h1M101 210.5h1M56 175.5h1M269 165.5h1M104 201.5h1M283 155.5h1M103 174.5h1M230 164.5h1M380 160.5h1M59 210.5h1M352 159.5h1M242 145.5h1M109 179.5h1M249 133.5h1M207 186.5h1M247 145.5h1M282 147.5h1M180 167.5h1M325 188.5h1M290 178.5h1M213 203.5h1M308 184.5h1M111 166.5h1M233 190.5h1M243 189.5h1M77 231.5h1M208 150.5h1M143 199.5h1M446 156.5h1M275 166.5h1M101 218.5h1M241 164.5h1M125 160.5h1M81 215.5h1M238 169.5h1M104 183.5h1M158 166.5h1M223 201.5h1M98 200.5h1M259 191.5h1M178 179.5h1M214 173.5h1M347 168.5h1M63 190.5h1M130 205.5h1M104 200.5h1M189 167.5h1M135 181.5h1M157 149.5h1M98 206.5h1M89 215.5h1M295 185.5h1M378 142.5h1M167 173.5h1M368 115.5h1M66 203.5h1M65 201.5h1M493 151.5h1M370 149.5h1M103 207.5h1M379 162.5h1M97 157.5h1M244 202.5h1M204 167.5h1M337 146.5h1M182 207.5h1M96 179.5h1M304 171.5h1M99 172.5h1M99 199.5h1M90 187.5h1M227 138.5h1M153 178.5h1M210 170.5h1M421 148.5h1M66 220.5h1M63 223.5h1M242 174.5h1M279 173.5h1M130 176.5h1M358 186.5h1M185 154.5h1M149 192.5h1M152 155.5h1M112 195.5h1M198 167.5h1M89 229.5h1M158 192.5h1M244 152.5h1M268 161.5h1M114 189.5h1M299 185.5h1M137 167.5h1M395 146.5h1M326 116.5h1M78 190.5h1M328 178.5h1M216 180.5h1M228 174.5h1M267 158.5h1M330 174.5h1M208 141.5h1M190 184.5h1M274 155.5h1M202 150.5h1M246 141.5h1M100 170.5h1M271 151.5h1M144 165.5h1M168 198.5h1M110 209.5h1M111 180.5h1M118 172.5h1M175 194.5h1M55 208.5h1M178 175.5h1M82 178.5h1M261 150.5h1M162 209.5h1M348 112.5h1M344 178.5h1M154 167.5h1M135 171.5h1M81 215.5h1M59 212.5h1M243 186.5h1M213 175.5h1M64 199.5h1M121 204.5h1M141 154.5h1M397 138.5h1M166 186.5h1M109 180.5h1M89 188.5h1M89 180.5h1M69 198.5h1M123 227.5h1M353 122.5h1M293 203.5h1M66 223.5h1M138 190.5h1M277 145.5h1M462 178.5h1M85 192.5h1M144 212.5h1M235 194.5h1M71 211.5h1M291 159.5h1M67 214.5h1M299 122.5h1M62 198.5h1M134 156.5h1M305 154.5h1M196 210.5h1M171 192.5h1M365 176.5h1M192 179.5h1M168 209.5h1M89 192.5h1M411 126.5h1M375 140.5h1M60 228.5h1M88 183.5h1M80 188.5h1M89 194.5h1M174 166.5h1M129 175.5h1M243 135.5h1M273 184.5h1M221 169.5h1M83 202.5h1M227 145.5h1M120 212.5h1M295 128.5h1M318 147.5h1M477 148.5h1M394 138.5h1M141 182.5h1M282 133.5h1M292 155.5h1M237 143.5h1M159 145.5h1M291 182.5h1M248 147.5h1M277 157.5h1M115 172.5h1M309 146.5h1M220 166.5h1M242 150.5h1M261 157.5h1M313 135.5h1M138 189.5h1M220 149.5h1M102 209.5h1M79 201.5h1M148 177.5h1M171 142.5h1M95 175.5h1M54 204.5h1M139 196.5h1M278 142.5h1M65 183.5h1M248 157.5h1M128 198.5h1M167 195.5h1M62 191.5h1M63 208.5h1M280 150.5h1M87 196.5h1M176 154.5h1M185 165.5h1M142 172.5h1M211 138.5h1M83 190.5h1M141 177.5h1M181 196.5h1M74 193.5h1M65 222.5h1M70 206.5h1M321 150.5h1M324 196.5h1M330 142.5h1M113 184.5h1M416 156.5h1M243 179.5h1M87 196.5h1M93 216.5h1M59 200.5h1M243 201.5h1M259 140.5h1M114 203.5h1M129 226.5h1M72 198.5h1M215 154.5h1M104 209.5h1M129 213.5h1M63 235.5h1M59 219.5h1M465 121.5h1M192 182.5h1M188 147.5h1M303 186.5h1M83 231.5h1M188 179.5h1M384 156.5h1M228 182.5h1M307 154.5h1M72 202.5h1M177 185.5h1M204 171.5h1M228 177.5h1M196 185.5h1M56 180.5h1M141 180.5h1M182 198.5h1M192 188.5h1M453 152.5h1M91 177.5h1M157 157.5h1M130 170.5h1M217 145.5h1M124 191.5h1M91 186.5h1M106 221.5h1M485 160.5h1M54 209.5h1M57 202.5h1M54 205.5h1M185 175.5h1M316 144.5h1M134 206.5h1M419 175.5h1M114 197.5h1M214 159.5h1M170 186.5h1M213 137.5h1M206 164.5h1M297 138.5h1M199 216.5h1M324 149.5h1M120 208.5h1M153 199.5h1M60 200.5h1M74 164.5h1M81 203.5h1M65 199.5h1M268 206.5h1M255 196.5h1M155 176.5h1M217 179.5h1M89 215.5h1M81 186.5h1M353 141.5h1M181 178.5h1M233 142.5h1M156 225.5h1M103 196.5h1M127 209.5h1M342 136.5h1M118 205.5h1M55 192.5h1M192 148.5h1M110 207.5h1M372 140.5h1M198 189.5h1M105 198.5h1M270 152.5h1M129 211.5h1M87 188.5h1M143 166.5h1M71 190.5h1M220 194.5h1M253 158.5h1M55 197.5h1M84 169.5h1M184 177.5h1M347 201.5h1M311 125.5h1M132 212.5h1M379 153.5h1M189 185.5h1M160 157.5h1M98 189.5h1M72 202.5h1M283 182.5h1M85 178.5h1M94 171.5h1M183 162.5h1M484 148.5h1M132 203.5h1M236 159.5h1M67 172.5h1M79 206.5h1M238 159.5h1M156 222.5h1M128 214.5h1M196 178.5h1M122 209.5h1M108 198.5h1M88 210.5h1M322 144.5h1M195 166.5h1M318 162.5h1M60 189.5h1M69 209.5h1M171 141.5h1M207 172.5h1M177 193.5h1M221 189.5h1M162 175.5h1M185 181.5h1M128 225.5h1M63 183.5h1M95 212.5h1M94 213.5h1M53 214.5h1M221 204.5h1M143 181.5h1M357 202.5h1M56 202.5h1M54 189.5h1M177 176.5h1M65 190.5h1M180 174.5h1M108 215.5h1M99 209.5h1M165 192.5h1M68 211.5h1M152 201.5h1M267 156.5h1M117 168.5h1M157 175.5h1M331 163.5h1M208 133.5h1M307 139.5h1M371 145.5h1M127 186.5h1M315 181.5h1M272 140.5h1M290 121.5h1M79 233.5h1M178 186.5h1M210 201.5h1M140 185.5h1M85 215.5h1M312 173.5h1M73 208.5h1M106 200.5h1M104 182.5h1M171 183.5h1M411 162.5h1M137 215.5h1M112 186.5h1M439 145.5h1M361 193.5h1M179 181.5h1M202 176.5h1M122 179.5h1M242 185.5h1M89 164.5h1M340 183.5h1M131 180.5h1M226 157.5h1M417 149.5h1M290 143.5h1M59 207.5h1M383 165.5h1M54 209.5h1M330 192.5h1M185 184.5h1M62 189.5h1M155 180.5h1M65 209.5h1M122 204.5h1M300 169.5h1M54 216.5h1M102 170.5h1M364 169.5h1M336 180.5h1M196 196.5h1M160 146.5h1M84 165.5h1M411 156.5h1M89 213.5h1M185 216.5h1M102 216.5h1M106 211.5h1M76 188.5h1M195 182.5h1M244 173.5h1M113 182.5h1M391 133.5h1M455 133.5h1M150 193.5h1M262 181.5h1M185 159.5h1M65 214.5h1M138 195.5h1M59 196.5h1M106 202.5h1M185 207.5h1M361 129.5h1M306 164.5h1M204 154.5h1M116 157.5h1M490 120.5h1M313 152.5h1M61 182.5h1M99 173.5h1M136 222.5h1M192 201.5h1M68 204.5h1M259 168.5h1M143 207.5h1M146 175.5h1M136 188.5h1M94 183.5h1M172 185.5h1M102 180.5h1M348 164.5h1M110 178.5h1M213 147.5h1M64 225.5h1M76 196.5h1M134 177.5h1M85 187.5h1M56 233.5h1M169 125.5h1M113 173.5h1M243 188.5h1M261 172.5h1M372 124.5h1M111 194.5h1M77 221.5h1M144 182.5h1M202 153.5h1M75 211.5h1M112 175.5h1M279 179.5h1M170 168.5h1M136 165.5h1M87 216.5h1M403 143.5h1M294 169.5h1M63 204.5h1M59 188.5h1M242 144.5h1M257 170.5h1M424 150.5h1M86 167.5h1M237 200.5h1M147 185.5h1M79 190.5h1M382 188.5h1M241 161.5h1M75 170.5h1M154 169.5h1M320 142.5h1M128 218.5h1M337 142.5h1M209 171.5h1M285 183.5h1M135 198.5h1M104 221.5h1M152 190.5h1M219 166.5h1M89 205.5h1M77 217.5h1M99 177.5h1M242 191.5h1M128 190.5h1M129 192.5h1M81 183.5h1M57 220.5h1M353 147.5h1M370 146.5h1M252 166.5h1M130 217.5h1M388 153.5h1M101 178.5h1M409 169.5h1M63 216.5h1M167 212.5h1M210 171.5h1M208 198.5h1M104 212.5h1M74 206.5h1M70 193.5h1M481 138.5h1M174 173.5h1M85 218.5h1M58 204.5h1M159 206.5h1M197 177.5h1M283 152.5h1M54 191.5h1M114 178.5h1M101 222.5h1M251 144.5h1M343 161.5h1M136 205.5h1M429 136.5h1M126 204.5h1M121 167.5h1M265 178.5h1M267 165.5h1M304 143.5h1M346 153.5h1M176 160.5h1M215 169.5h1M473 110.5h1M64 172.5h1M349 112.5h1M123 186.5h1M75 201.5h1M79 187.5h1M56 228.5h1M189 184.5h1M181 211.5h1M84 231.5h1M194 188.5h1M289 172.5h1M56 187.5h1M58 173.5h1M64 170.5h1M157 144.5h1M165 149.5h1M73 222.5h1M89 190.5h1M89 203.5h1M294 189.5h1M193 156.5h1M230 179.5h1M213 144.5h1M176 179.5h1M131 200.5h1M81 211.5h1M172 181.5h1M75 190.5h1M149 177.5h1M291 169.5h1M222 178.5h1M285 143.5h1M225 152.5h1M94 192.5h1M143 173.5h1M120 161.5h1M160 203.5h1M64 193.5h1M112 194.5h1M165 180.5h1M123 201.5h1M82 224.5h1M155 213.5h1M172 161.5h1M140 207.5h1M158 216.5h1M144 181.5h1M251 152.5h1M71 196.5h1M239 140.5h1M58 201.5h1M87 181.5h1M91 182.5h1M102 198.5h1M93 212.5h1M247 205.5h1M191 159.5h1M227 157.5h1M79 198.5h1M364 168.5h1M73 219.5h1M255 209.5h1M263 190.5h1M165 190.5h1M267 157.5h1M91 213.5h1M53 221.5h1M145 188.5h1M274 148.5h1M76 196.5h1M346 150.5h1M302 195.5h1M118 183.5h1M213 188.5h1M412 139.5h1M145 148.5h1" stroke="#00ffff" stroke-width="1" fill="none"/>
</svg>
<span class="ax" style="left:27.7px;top:145px;letter-spacing:0.05px;">50.0</span>
<span class="ax" style="left:27.7px;top:171px;letter-spacing:0.05px;">45.0</span>
<span class="ax" style="left:27.7px;top:196px;letter-spacing:0.05px;">40.0</span>
<span class="ax" style="left:27.7px;top:221px;letter-spacing:0.05px;">35.0</span>
<span class="ax" style="left:27.7px;top:246px;letter-spacing:0.05px;">30.0</span>
<span class="ax" style="left:27.7px;top:271px;letter-spacing:0.05px;">25.0</span>
<span class="ax" style="left:27.7px;top:296px;letter-spacing:0.05px;">20.0</span>
<span class="ax" style="left:27.7px;top:321px;letter-spacing:0.05px;">15.0</span>
<span class="ax" style="left:27.7px;top:346px;letter-spacing:0.05px;">10.0</span>
<span class="ax" style="left:27.7px;top:371px;letter-spacing:0.05px;">5.00</span>
<span class="ax" style="left:52.2px;top:138px;letter-spacing:0;transform:scaleX(0.928);transform-origin:0 0;">ms</span>
<span class="ax" style="left:49.0px;top:406px;letter-spacing:0.36px;">0</span>
<span class="ax" style="left:89.2px;top:406px;letter-spacing:0.01px;">800</span>
<span class="ax" style="left:132.0px;top:406px;letter-spacing:0.03px;">1600</span>
<span class="ax" style="left:177.9px;top:406px;letter-spacing:0.03px;">2400</span>
<span class="ax" style="left:223.7px;top:406px;letter-spacing:0.03px;">3200</span>
<span class="ax" style="left:269.6px;top:406px;letter-spacing:0.03px;">4000</span>
<span class="ax" style="left:315.4px;top:406px;letter-spacing:0.03px;">4800</span>
<span class="ax" style="left:361.2px;top:406px;letter-spacing:0.03px;">5600</span>
<span class="ax" style="left:407.1px;top:406px;letter-spacing:0.03px;">6400</span>
<span class="ax" style="left:453.0px;top:406px;letter-spacing:0.03px;">7200</span>
<span class="ax" style="left:490.9px;top:406px;letter-spacing:0.13px;">8001gB</span>
<div class="abs" style="left:548px;top:149px;width:82px;height:20px;border:2px solid #0078d7;background:#e1e1e1"></div>
<span class="lbl" style="left:578.5px;top:154px;letter-spacing:-0.14px;">Start</span>
<div class="hl" style="left:539px;top:186px;width:114px"></div>
<div class="hl" style="left:539px;top:231px;width:114px"></div>
<div class="hl" style="left:539px;top:296px;width:114px"></div>
<svg class="abs" style="left:544px;top:194px" width="14" height="34"><circle cx="6.500" cy="6.500" r="6" fill="#fff" stroke="#333" stroke-width="1"/><circle cx="6.500" cy="6.500" r="3.300" fill="#222"/><circle cx="6.500" cy="25.500" r="6" fill="#fff" stroke="#333" stroke-width="1"/></svg>
<span class="lbl" style="left:559.9px;top:193.5px;letter-spacing:0;transform:scaleX(0.899);transform-origin:0 0;">Read</span>
<span class="lbl" style="left:559.9px;top:212.5px;letter-spacing:0.10px;">Write</span>
<div class="cb" style="left:544px;top:241px"></div>
<span class="lbl" style="left:560.0px;top:241px;letter-spacing:-0.13px;">Short stroke</span>
<div class="abs" style="left:544px;top:263px;width:70px;height:21px;border:1px solid #c4c4c4;background:#fff"></div>
<span class="lbl" style="left:547.5px;top:267px;letter-spacing:-0.06px;color:#8a8a8a;">40</span>
<div class="abs" style="left:598px;top:264px;width:16px;height:21px;background:#f0f0f0"></div>
<div class="abs" style="left:599px;top:265px;width:13px;height:8px;border:1px solid #dadada;background:#f0f0f0"></div>
<div class="abs" style="left:599px;top:275px;width:13px;height:8px;border:1px solid #dadada;background:#f0f0f0"></div>
<svg class="abs" style="left:599px;top:265px" width="15" height="20"><path d="M4.500 6.500l3-3.500 3 3.500z" fill="#555"/><path d="M4.500 13.500l3 3.500 3-3.500z" fill="#555"/></svg>
<span class="lbl" style="left:629.7px;top:267px;letter-spacing:-0.29px;">gB</span>
<div class="cb" style="left:544px;top:311px"></div>
<svg class="abs" style="left:544px;top:311px" width="13" height="13"><path d="M2.500 7l2.800 2.800 5.700-6.300" stroke="#333" stroke-width="1.100" fill="none"/></svg>
<span class="lbl" style="left:560.0px;top:311px;letter-spacing:-0.44px;word-spacing:0.44px;">4 KB align</span>
<div class="abs" style="left:40px;top:446px;width:607px;height:2px;background:#626262"></div>
<div class="abs" style="left:145px;top:430px;width:2px;height:121px;background:#626262"></div>
<div class="abs" style="left:273px;top:430px;width:2px;height:121px;background:#626262"></div>
<div class="abs" style="left:407px;top:430px;width:2px;height:121px;background:#626262"></div>
<div class="abs" style="left:535px;top:430px;width:2px;height:121px;background:#626262"></div>
<span class="bm" style="left:51.8px;top:428.5px;letter-spacing:0.51px;">transfer size</span>
<span class="bm" style="left:160.5px;top:428.5px;letter-spacing:0.65px;">operations / sec</span>
<span class="bm" style="left:287.2px;top:428.5px;letter-spacing:0.40px;">avg. access time</span>
<span class="bm" style="left:422.0px;top:428.5px;letter-spacing:0.31px;">max. access time</span>
<span class="bm" style="left:566.1px;top:428.5px;letter-spacing:0.17px;">avg. speed</span>
<div class="sw" style="left:22px;top:457px;background:#ffff00"></div>
<div class="cb" style="left:40px;top:455px"></div><svg class="abs" style="left:40px;top:455px" width="13" height="13"><path d="M2.500 7l2.800 2.800 5.700-6.300" stroke="#333" stroke-width="1.100" fill="none"/></svg>
<span class="lbl" style="left:56.2px;top:455px;letter-spacing:-0.42px;word-spacing:0.42px;">512 bytes</span>
<span class="bm" style="left:205.5px;top:451px;letter-spacing:0.24px;">79 IOPS</span>
<span class="bm" style="left:322.6px;top:451px;letter-spacing:0.06px;">12.518 ms</span>
<span class="bm" style="left:449.1px;top:451px;letter-spacing:0.29px;">25.140 ms</span>
<span class="bm" style="left:568.8px;top:451px;letter-spacing:0.56px;">0.039 MB/s</span>
<div class="sw" style="left:22px;top:476px;background:#ff0000"></div>
<div class="cb" style="left:40px;top:474px"></div><svg class="abs" style="left:40px;top:474px" width="13" height="13"><path d="M2.500 7l2.800 2.800 5.700-6.300" stroke="#333" stroke-width="1.100" fill="none"/></svg>
<span class="lbl" style="left:56.2px;top:474px;letter-spacing:0;transform:scaleX(0.857);transform-origin:0 0;">4 KB</span>
<span class="bm" style="left:205.5px;top:469.6px;letter-spacing:0.24px;">61 IOPS</span>
<span class="bm" style="left:322.6px;top:469.6px;letter-spacing:0.06px;">16.164 ms</span>
<span class="bm" style="left:449.1px;top:469.6px;letter-spacing:0.29px;">28.186 ms</span>
<span class="bm" style="left:568.8px;top:469.6px;letter-spacing:0.56px;">0.242 MB/s</span>
<div class="sw" style="left:22px;top:495px;background:#00ff00"></div>
<div class="cb" style="left:40px;top:493px"></div><svg class="abs" style="left:40px;top:493px" width="13" height="13"><path d="M2.500 7l2.800 2.800 5.700-6.300" stroke="#333" stroke-width="1.100" fill="none"/></svg>
<span class="lbl" style="left:56.2px;top:493px;letter-spacing:0;transform:scaleX(0.865);transform-origin:0 0;">64 KB</span>
<span class="bm" style="left:205.5px;top:488.8px;letter-spacing:0.24px;">67 IOPS</span>
<span class="bm" style="left:322.6px;top:488.8px;letter-spacing:0.06px;">14.783 ms</span>
<span class="bm" style="left:449.1px;top:488.8px;letter-spacing:0.29px;">28.040 ms</span>
<span class="bm" style="left:568.8px;top:488.8px;letter-spacing:0.56px;">4.228 MB/s</span>
<div class="sw" style="left:22px;top:515px;background:#0080ff"></div>
<div class="cb" style="left:40px;top:513px"></div><svg class="abs" style="left:40px;top:513px" width="13" height="13"><path d="M2.500 7l2.800 2.800 5.700-6.300" stroke="#333" stroke-width="1.100" fill="none"/></svg>
<span class="lbl" style="left:56.2px;top:513px;letter-spacing:0;transform:scaleX(0.939);transform-origin:0 0;">1 MB</span>
<span class="bm" style="left:205.5px;top:509px;letter-spacing:0.24px;">52 IOPS</span>
<span class="bm" style="left:322.6px;top:509px;letter-spacing:0.06px;">19.166 ms</span>
<span class="bm" style="left:449.1px;top:509px;letter-spacing:0.29px;">34.750 ms</span>
<span class="bm" style="left:562.0px;top:509px;letter-spacing:0.52px;">52.174 MB/s</span>
<div class="sw" style="left:22px;top:536px;background:#00ffff"></div>
<div class="cb" style="left:40px;top:534px"></div><svg class="abs" style="left:40px;top:534px" width="13" height="13"><path d="M2.500 7l2.800 2.800 5.700-6.300" stroke="#333" stroke-width="1.100" fill="none"/></svg>
<span class="lbl" style="left:56.2px;top:534px;letter-spacing:-0.15px;">Random</span>
<span class="bm" style="left:205.5px;top:530.3px;letter-spacing:0.24px;">60 IOPS</span>
<span class="bm" style="left:322.6px;top:530.3px;letter-spacing:0.06px;">16.663 ms</span>
<span class="bm" style="left:449.1px;top:530.3px;letter-spacing:0.29px;">35.004 ms</span>
<span class="bm" style="left:562.0px;top:530.3px;letter-spacing:0.52px;">30.449 MB/s</span>
</div>
</body>
</html>
